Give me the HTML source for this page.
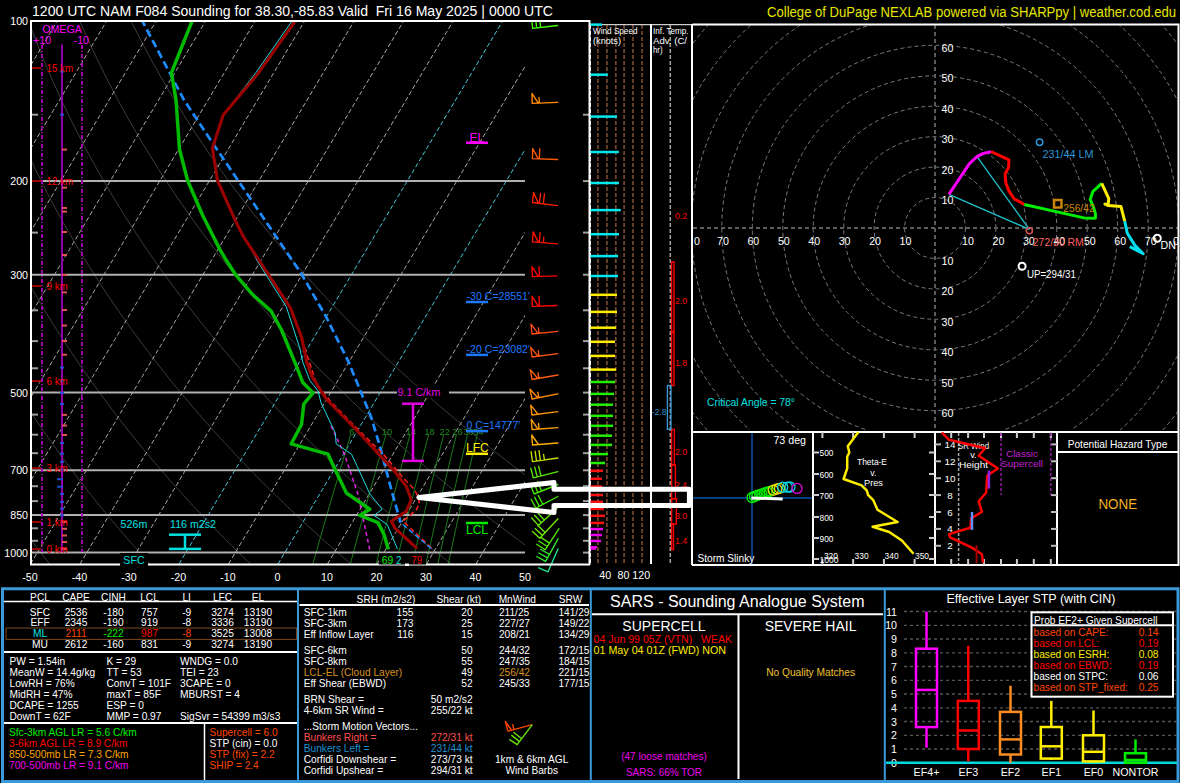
<!DOCTYPE html><html><head><meta charset="utf-8"><style>html,body{margin:0;padding:0;background:#000;width:1180px;height:783px;overflow:hidden}</style></head><body><svg width="1180" height="783" viewBox="0 0 1180 783" style="position:absolute;left:0;top:0" font-family="Liberation Sans, sans-serif">
<rect width="1180" height="783" fill="#000"/>
<defs><clipPath id="skc"><rect x="32" y="22" width="493" height="542"/></clipPath><clipPath id="hodc"><rect x="693" y="25" width="486" height="405"/></clipPath></defs>
<text x="32" y="16" fill="#fff" font-size="15" text-anchor="start" textLength="521" lengthAdjust="spacingAndGlyphs" xml:space="preserve">1200 UTC NAM F084 Sounding for 38.30,-85.83 Valid  Fri 16 May 2025 | 0000 UTC</text>
<text x="767" y="17" fill="#e6e600" font-size="14" text-anchor="start" textLength="409" lengthAdjust="spacingAndGlyphs" >College of DuPage NEXLAB powered via SHARPpy | weather.cod.edu</text>
<g clip-path="url(#skc)">
<polyline points="-552.6,566.1 -552.7,563.9 -552.8,561.7 -552.9,559.4 -553,557.2 -553.1,554.9 -553.2,552.6 -553.3,550.3 -553.4,547.9 -553.5,545.6 -553.6,543.2 -553.7,540.8 -553.7,538.3 -553.8,535.8 -553.9,533.4 -553.9,530.8 -554,528.3 -554,525.7 -554.1,523.1 -554.1,520.5 -554.2,517.8 -554.2,515.1 -554.2,512.4 -554.3,509.6 -554.3,506.8 -554.3,504 -554.3,501.1 -554.3,498.2 -554.3,495.2 -554.3,492.3 -554.3,489.3 -554.2,486.2 -554.2,483.1 -554.1,480 -554.1,476.8 -554,473.5 -554,470.3 -553.9,466.9 -553.8,463.6 -553.7,460.2 -553.6,456.7 -553.5,453.2 -553.4,449.6 -553.2,445.9 -553.1,442.3 -552.9,438.5 -552.8,434.7 -552.6,430.8 -552.4,426.9 -552.2,422.8 -551.9,418.8 -551.7,414.6 -551.4,410.4 -551.2,406.1 -550.9,401.7 -550.6,397.2 -550.2,392.6 -549.9,387.9 -549.5,383.2 -549.1,378.3 -548.7,373.4 -548.2,368.3 -547.8,363.1 -547.3,357.8 -546.7,352.4 -546.2,346.8 -545.6,341.1 -545,335.3 -544.3,329.3 -543.6,323.1 -542.8,316.8 -542,310.3 -541.2,303.6 -540.3,296.7 -539.3,289.6 -538.3,282.3 -537.2,274.7 -536.1,266.9 -534.8,258.8 -533.5,250.4 -532.1,241.7 -530.6,232.6 -529,223.2 -527.3,213.4 -525.5,203.1 -523.5,192.4 -521.3,181.1 -519,169.3 -516.4,156.8 -513.7,143.6 -510.7,129.6 -507.3,114.7 -503.7,98.8 -499.6,81.7 -495.1,63.2 -490,43.1 -484.3,21.1" fill="none" stroke="#3c3c3c" stroke-width="1" stroke-linejoin="round" />
<polyline points="-452,566.1 -452.3,563.9 -452.7,561.7 -453.1,559.4 -453.5,557.2 -453.9,554.9 -454.2,552.6 -454.6,550.3 -455,547.9 -455.4,545.6 -455.7,543.2 -456.1,540.8 -456.5,538.3 -456.8,535.8 -457.2,533.4 -457.6,530.8 -457.9,528.3 -458.3,525.7 -458.6,523.1 -459,520.5 -459.3,517.8 -459.7,515.1 -460,512.4 -460.4,509.6 -460.7,506.8 -461.1,504 -461.4,501.1 -461.7,498.2 -462.1,495.2 -462.4,492.3 -462.7,489.3 -463,486.2 -463.4,483.1 -463.7,480 -464,476.8 -464.3,473.5 -464.6,470.3 -464.9,466.9 -465.1,463.6 -465.4,460.2 -465.7,456.7 -466,453.2 -466.2,449.6 -466.5,445.9 -466.7,442.3 -467,438.5 -467.2,434.7 -467.4,430.8 -467.7,426.9 -467.9,422.8 -468.1,418.8 -468.3,414.6 -468.4,410.4 -468.6,406.1 -468.8,401.7 -468.9,397.2 -469,392.6 -469.1,387.9 -469.2,383.2 -469.3,378.3 -469.4,373.4 -469.4,368.3 -469.5,363.1 -469.5,357.8 -469.5,352.4 -469.4,346.8 -469.4,341.1 -469.3,335.3 -469.2,329.3 -469.1,323.1 -468.9,316.8 -468.7,310.3 -468.4,303.6 -468.2,296.7 -467.8,289.6 -467.5,282.3 -467,274.7 -466.6,266.9 -466,258.8 -465.4,250.4 -464.8,241.7 -464,232.6 -463.2,223.2 -462.3,213.4 -461.2,203.1 -460.1,192.4 -458.8,181.1 -457.4,169.3 -455.8,156.8 -454,143.6 -452,129.6 -449.8,114.7 -447.2,98.8 -444.4,81.7 -441.1,63.2 -437.3,43.1 -433,21.1" fill="none" stroke="#3c3c3c" stroke-width="1" stroke-linejoin="round" />
<polyline points="-351.3,566.1 -352,563.9 -352.6,561.7 -353.3,559.4 -353.9,557.2 -354.6,554.9 -355.2,552.6 -355.9,550.3 -356.6,547.9 -357.2,545.6 -357.9,543.2 -358.5,540.8 -359.2,538.3 -359.9,535.8 -360.5,533.4 -361.2,530.8 -361.9,528.3 -362.5,525.7 -363.2,523.1 -363.9,520.5 -364.5,517.8 -365.2,515.1 -365.9,512.4 -366.5,509.6 -367.2,506.8 -367.9,504 -368.5,501.1 -369.2,498.2 -369.9,495.2 -370.5,492.3 -371.2,489.3 -371.8,486.2 -372.5,483.1 -373.2,480 -373.8,476.8 -374.5,473.5 -375.2,470.3 -375.8,466.9 -376.5,463.6 -377.1,460.2 -377.8,456.7 -378.4,453.2 -379.1,449.6 -379.7,445.9 -380.4,442.3 -381,438.5 -381.7,434.7 -382.3,430.8 -382.9,426.9 -383.6,422.8 -384.2,418.8 -384.8,414.6 -385.4,410.4 -386,406.1 -386.6,401.7 -387.2,397.2 -387.8,392.6 -388.4,387.9 -389,383.2 -389.5,378.3 -390.1,373.4 -390.6,368.3 -391.2,363.1 -391.7,357.8 -392.2,352.4 -392.7,346.8 -393.2,341.1 -393.7,335.3 -394.1,329.3 -394.5,323.1 -394.9,316.8 -395.3,310.3 -395.7,303.6 -396,296.7 -396.3,289.6 -396.6,282.3 -396.9,274.7 -397.1,266.9 -397.2,258.8 -397.3,250.4 -397.4,241.7 -397.4,232.6 -397.3,223.2 -397.2,213.4 -397,203.1 -396.7,192.4 -396.3,181.1 -395.8,169.3 -395.1,156.8 -394.3,143.6 -393.4,129.6 -392.2,114.7 -390.8,98.8 -389.1,81.7 -387.1,63.2 -384.6,43.1 -381.7,21.1" fill="none" stroke="#3c3c3c" stroke-width="1" stroke-linejoin="round" />
<polyline points="-250.6,566.1 -251.6,563.9 -252.5,561.7 -253.4,559.4 -254.4,557.2 -255.3,554.9 -256.2,552.6 -257.2,550.3 -258.1,547.9 -259.1,545.6 -260,543.2 -261,540.8 -261.9,538.3 -262.9,535.8 -263.9,533.4 -264.8,530.8 -265.8,528.3 -266.8,525.7 -267.7,523.1 -268.7,520.5 -269.7,517.8 -270.7,515.1 -271.7,512.4 -272.7,509.6 -273.6,506.8 -274.6,504 -275.6,501.1 -276.6,498.2 -277.6,495.2 -278.6,492.3 -279.6,489.3 -280.7,486.2 -281.7,483.1 -282.7,480 -283.7,476.8 -284.7,473.5 -285.7,470.3 -286.8,466.9 -287.8,463.6 -288.8,460.2 -289.9,456.7 -290.9,453.2 -291.9,449.6 -293,445.9 -294,442.3 -295.1,438.5 -296.1,434.7 -297.1,430.8 -298.2,426.9 -299.2,422.8 -300.3,418.8 -301.3,414.6 -302.4,410.4 -303.4,406.1 -304.5,401.7 -305.5,397.2 -306.6,392.6 -307.6,387.9 -308.7,383.2 -309.7,378.3 -310.8,373.4 -311.8,368.3 -312.9,363.1 -313.9,357.8 -314.9,352.4 -316,346.8 -317,341.1 -318,335.3 -319,329.3 -320,323.1 -321,316.8 -322,310.3 -323,303.6 -323.9,296.7 -324.8,289.6 -325.8,282.3 -326.7,274.7 -327.5,266.9 -328.4,258.8 -329.2,250.4 -330,241.7 -330.8,232.6 -331.5,223.2 -332.1,213.4 -332.8,203.1 -333.3,192.4 -333.8,181.1 -334.2,169.3 -334.5,156.8 -334.7,143.6 -334.7,129.6 -334.6,114.7 -334.3,98.8 -333.8,81.7 -333,63.2 -331.9,43.1 -330.4,21.1" fill="none" stroke="#3c3c3c" stroke-width="1" stroke-linejoin="round" />
<polyline points="-150,566.1 -151.2,563.9 -152.4,561.7 -153.6,559.4 -154.8,557.2 -156,554.9 -157.2,552.6 -158.5,550.3 -159.7,547.9 -160.9,545.6 -162.2,543.2 -163.4,540.8 -164.7,538.3 -165.9,535.8 -167.2,533.4 -168.5,530.8 -169.7,528.3 -171,525.7 -172.3,523.1 -173.6,520.5 -174.9,517.8 -176.2,515.1 -177.5,512.4 -178.8,509.6 -180.1,506.8 -181.4,504 -182.7,501.1 -184.1,498.2 -185.4,495.2 -186.8,492.3 -188.1,489.3 -189.5,486.2 -190.8,483.1 -192.2,480 -193.6,476.8 -195,473.5 -196.3,470.3 -197.7,466.9 -199.1,463.6 -200.5,460.2 -201.9,456.7 -203.4,453.2 -204.8,449.6 -206.2,445.9 -207.7,442.3 -209.1,438.5 -210.5,434.7 -212,430.8 -213.5,426.9 -214.9,422.8 -216.4,418.8 -217.9,414.6 -219.4,410.4 -220.9,406.1 -222.4,401.7 -223.9,397.2 -225.4,392.6 -226.9,387.9 -228.4,383.2 -229.9,378.3 -231.5,373.4 -233,368.3 -234.6,363.1 -236.1,357.8 -237.7,352.4 -239.2,346.8 -240.8,341.1 -242.4,335.3 -243.9,329.3 -245.5,323.1 -247.1,316.8 -248.6,310.3 -250.2,303.6 -251.8,296.7 -253.4,289.6 -254.9,282.3 -256.5,274.7 -258,266.9 -259.6,258.8 -261.1,250.4 -262.6,241.7 -264.1,232.6 -265.6,223.2 -267.1,213.4 -268.5,203.1 -269.9,192.4 -271.3,181.1 -272.6,169.3 -273.8,156.8 -275,143.6 -276.1,129.6 -277,114.7 -277.9,98.8 -278.5,81.7 -279,63.2 -279.2,43.1 -279.1,21.1" fill="none" stroke="#3c3c3c" stroke-width="1" stroke-linejoin="round" />
<polyline points="-49.3,566.1 -50.8,563.9 -52.3,561.7 -53.7,559.4 -55.2,557.2 -56.7,554.9 -58.2,552.6 -59.8,550.3 -61.3,547.9 -62.8,545.6 -64.3,543.2 -65.9,540.8 -67.4,538.3 -69,535.8 -70.5,533.4 -72.1,530.8 -73.7,528.3 -75.3,525.7 -76.8,523.1 -78.4,520.5 -80,517.8 -81.7,515.1 -83.3,512.4 -84.9,509.6 -86.6,506.8 -88.2,504 -89.9,501.1 -91.5,498.2 -93.2,495.2 -94.9,492.3 -96.6,489.3 -98.3,486.2 -100,483.1 -101.7,480 -103.4,476.8 -105.2,473.5 -106.9,470.3 -108.7,466.9 -110.5,463.6 -112.2,460.2 -114,456.7 -115.8,453.2 -117.6,449.6 -119.5,445.9 -121.3,442.3 -123.1,438.5 -125,434.7 -126.9,430.8 -128.7,426.9 -130.6,422.8 -132.5,418.8 -134.4,414.6 -136.4,410.4 -138.3,406.1 -140.2,401.7 -142.2,397.2 -144.2,392.6 -146.2,387.9 -148.1,383.2 -150.2,378.3 -152.2,373.4 -154.2,368.3 -156.3,363.1 -158.3,357.8 -160.4,352.4 -162.5,346.8 -164.6,341.1 -166.7,335.3 -168.8,329.3 -171,323.1 -173.1,316.8 -175.3,310.3 -177.5,303.6 -179.7,296.7 -181.9,289.6 -184.1,282.3 -186.3,274.7 -188.5,266.9 -190.8,258.8 -193,250.4 -195.3,241.7 -197.5,232.6 -199.8,223.2 -202,213.4 -204.3,203.1 -206.5,192.4 -208.8,181.1 -211,169.3 -213.2,156.8 -215.3,143.6 -217.4,129.6 -219.5,114.7 -221.4,98.8 -223.3,81.7 -225,63.2 -226.6,43.1 -227.9,21.1" fill="none" stroke="#3c3c3c" stroke-width="1" stroke-linejoin="round" />
<polyline points="51.3,566.1 49.6,563.9 47.8,561.7 46.1,559.4 44.3,557.2 42.5,554.9 40.8,552.6 39,550.3 37.2,547.9 35.3,545.6 33.5,543.2 31.7,540.8 29.9,538.3 28,535.8 26.1,533.4 24.3,530.8 22.4,528.3 20.5,525.7 18.6,523.1 16.7,520.5 14.8,517.8 12.8,515.1 10.9,512.4 8.9,509.6 7,506.8 5,504 3,501.1 1,498.2 -1,495.2 -3,492.3 -5,489.3 -7.1,486.2 -9.2,483.1 -11.2,480 -13.3,476.8 -15.4,473.5 -17.5,470.3 -19.6,466.9 -21.8,463.6 -23.9,460.2 -26.1,456.7 -28.3,453.2 -30.5,449.6 -32.7,445.9 -34.9,442.3 -37.2,438.5 -39.4,434.7 -41.7,430.8 -44,426.9 -46.3,422.8 -48.6,418.8 -51,414.6 -53.3,410.4 -55.7,406.1 -58.1,401.7 -60.5,397.2 -63,392.6 -65.4,387.9 -67.9,383.2 -70.4,378.3 -72.9,373.4 -75.4,368.3 -78,363.1 -80.5,357.8 -83.1,352.4 -85.8,346.8 -88.4,341.1 -91.1,335.3 -93.7,329.3 -96.5,323.1 -99.2,316.8 -101.9,310.3 -104.7,303.6 -107.5,296.7 -110.4,289.6 -113.2,282.3 -116.1,274.7 -119,266.9 -122,258.8 -124.9,250.4 -127.9,241.7 -130.9,232.6 -133.9,223.2 -137,213.4 -140.1,203.1 -143.1,192.4 -146.3,181.1 -149.4,169.3 -152.5,156.8 -155.6,143.6 -158.8,129.6 -161.9,114.7 -165,98.8 -168,81.7 -171,63.2 -173.9,43.1 -176.6,21.1" fill="none" stroke="#3c3c3c" stroke-width="1" stroke-linejoin="round" />
<polyline points="152,566.1 150,563.9 148,561.7 145.9,559.4 143.9,557.2 141.8,554.9 139.8,552.6 137.7,550.3 135.6,547.9 133.5,545.6 131.4,543.2 129.3,540.8 127.1,538.3 125,535.8 122.8,533.4 120.6,530.8 118.5,528.3 116.3,525.7 114.1,523.1 111.8,520.5 109.6,517.8 107.4,515.1 105.1,512.4 102.8,509.6 100.5,506.8 98.2,504 95.9,501.1 93.6,498.2 91.2,495.2 88.9,492.3 86.5,489.3 84.1,486.2 81.7,483.1 79.3,480 76.8,476.8 74.4,473.5 71.9,470.3 69.4,466.9 66.9,463.6 64.4,460.2 61.8,456.7 59.2,453.2 56.7,449.6 54.1,445.9 51.4,442.3 48.8,438.5 46.1,434.7 43.4,430.8 40.7,426.9 38,422.8 35.3,418.8 32.5,414.6 29.7,410.4 26.9,406.1 24,401.7 21.2,397.2 18.3,392.6 15.3,387.9 12.4,383.2 9.4,378.3 6.4,373.4 3.4,368.3 0.3,363.1 -2.8,357.8 -5.9,352.4 -9,346.8 -12.2,341.1 -15.4,335.3 -18.7,329.3 -21.9,323.1 -25.3,316.8 -28.6,310.3 -32,303.6 -35.4,296.7 -38.9,289.6 -42.4,282.3 -45.9,274.7 -49.5,266.9 -53.1,258.8 -56.8,250.4 -60.5,241.7 -64.3,232.6 -68.1,223.2 -71.9,213.4 -75.8,203.1 -79.8,192.4 -83.7,181.1 -87.8,169.3 -91.9,156.8 -96,143.6 -100.1,129.6 -104.3,114.7 -108.5,98.8 -112.7,81.7 -117,63.2 -121.2,43.1 -125.3,21.1" fill="none" stroke="#3c3c3c" stroke-width="1" stroke-linejoin="round" />
<polyline points="252.7,566.1 250.4,563.9 248.1,561.7 245.8,559.4 243.4,557.2 241.1,554.9 238.8,552.6 236.4,550.3 234,547.9 231.6,545.6 229.2,543.2 226.8,540.8 224.4,538.3 221.9,535.8 219.5,533.4 217,530.8 214.5,528.3 212,525.7 209.5,523.1 207,520.5 204.4,517.8 201.9,515.1 199.3,512.4 196.7,509.6 194.1,506.8 191.4,504 188.8,501.1 186.1,498.2 183.4,495.2 180.7,492.3 178,489.3 175.3,486.2 172.5,483.1 169.7,480 167,476.8 164.1,473.5 161.3,470.3 158.4,466.9 155.6,463.6 152.7,460.2 149.7,456.7 146.8,453.2 143.8,449.6 140.8,445.9 137.8,442.3 134.8,438.5 131.7,434.7 128.6,430.8 125.5,426.9 122.3,422.8 119.1,418.8 115.9,414.6 112.7,410.4 109.4,406.1 106.2,401.7 102.8,397.2 99.5,392.6 96.1,387.9 92.7,383.2 89.2,378.3 85.7,373.4 82.2,368.3 78.6,363.1 75,357.8 71.4,352.4 67.7,346.8 64,341.1 60.2,335.3 56.4,329.3 52.6,323.1 48.7,316.8 44.7,310.3 40.8,303.6 36.7,296.7 32.6,289.6 28.5,282.3 24.3,274.7 20,266.9 15.7,258.8 11.3,250.4 6.9,241.7 2.3,232.6 -2.2,223.2 -6.9,213.4 -11.6,203.1 -16.4,192.4 -21.2,181.1 -26.2,169.3 -31.2,156.8 -36.3,143.6 -41.5,129.6 -46.7,114.7 -52.1,98.8 -57.5,81.7 -62.9,63.2 -68.5,43.1 -74,21.1" fill="none" stroke="#3c3c3c" stroke-width="1" stroke-linejoin="round" />
<polyline points="353.3,566.1 350.8,563.9 348.2,561.7 345.6,559.4 343,557.2 340.4,554.9 337.8,552.6 335.1,550.3 332.5,547.9 329.8,545.6 327.1,543.2 324.4,540.8 321.7,538.3 318.9,535.8 316.2,533.4 313.4,530.8 310.6,528.3 307.8,525.7 305,523.1 302.1,520.5 299.3,517.8 296.4,515.1 293.5,512.4 290.6,509.6 287.6,506.8 284.7,504 281.7,501.1 278.7,498.2 275.7,495.2 272.6,492.3 269.6,489.3 266.5,486.2 263.4,483.1 260.2,480 257.1,476.8 253.9,473.5 250.7,470.3 247.5,466.9 244.2,463.6 240.9,460.2 237.6,456.7 234.3,453.2 231,449.6 227.6,445.9 224.2,442.3 220.7,438.5 217.2,434.7 213.7,430.8 210.2,426.9 206.6,422.8 203,418.8 199.4,414.6 195.7,410.4 192,406.1 188.3,401.7 184.5,397.2 180.7,392.6 176.8,387.9 172.9,383.2 169,378.3 165,373.4 161,368.3 156.9,363.1 152.8,357.8 148.7,352.4 144.5,346.8 140.2,341.1 135.9,335.3 131.5,329.3 127.1,323.1 122.6,316.8 118.1,310.3 113.5,303.6 108.8,296.7 104.1,289.6 99.3,282.3 94.4,274.7 89.5,266.9 84.5,258.8 79.4,250.4 74.2,241.7 69,232.6 63.6,223.2 58.2,213.4 52.6,203.1 47,192.4 41.3,181.1 35.4,169.3 29.5,156.8 23.4,143.6 17.2,129.6 10.8,114.7 4.4,98.8 -2.2,81.7 -8.9,63.2 -15.8,43.1 -22.8,21.1" fill="none" stroke="#3c3c3c" stroke-width="1" stroke-linejoin="round" />
<polyline points="454,566.1 451.2,563.9 448.3,561.7 445.4,559.4 442.6,557.2 439.7,554.9 436.8,552.6 433.8,550.3 430.9,547.9 427.9,545.6 424.9,543.2 421.9,540.8 418.9,538.3 415.9,535.8 412.8,533.4 409.7,530.8 406.7,528.3 403.5,525.7 400.4,523.1 397.3,520.5 394.1,517.8 390.9,515.1 387.7,512.4 384.4,509.6 381.2,506.8 377.9,504 374.6,501.1 371.2,498.2 367.9,495.2 364.5,492.3 361.1,489.3 357.7,486.2 354.2,483.1 350.7,480 347.2,476.8 343.7,473.5 340.1,470.3 336.5,466.9 332.9,463.6 329.2,460.2 325.6,456.7 321.9,453.2 318.1,449.6 314.3,445.9 310.5,442.3 306.7,438.5 302.8,434.7 298.9,430.8 294.9,426.9 290.9,422.8 286.9,418.8 282.9,414.6 278.7,410.4 274.6,406.1 270.4,401.7 266.2,397.2 261.9,392.6 257.6,387.9 253.2,383.2 248.8,378.3 244.3,373.4 239.8,368.3 235.2,363.1 230.6,357.8 225.9,352.4 221.2,346.8 216.4,341.1 211.5,335.3 206.6,329.3 201.6,323.1 196.6,316.8 191.4,310.3 186.2,303.6 181,296.7 175.6,289.6 170.2,282.3 164.6,274.7 159,266.9 153.3,258.8 147.5,250.4 141.6,241.7 135.6,232.6 129.5,223.2 123.2,213.4 116.9,203.1 110.4,192.4 103.8,181.1 97,169.3 90.1,156.8 83.1,143.6 75.8,129.6 68.4,114.7 60.8,98.8 53.1,81.7 45.1,63.2 36.9,43.1 28.5,21.1" fill="none" stroke="#3c3c3c" stroke-width="1" stroke-linejoin="round" />
<polyline points="554.7,566.1 551.5,563.9 548.4,561.7 545.3,559.4 542.1,557.2 539,554.9 535.8,552.6 532.5,550.3 529.3,547.9 526.1,545.6 522.8,543.2 519.5,540.8 516.2,538.3 512.8,535.8 509.5,533.4 506.1,530.8 502.7,528.3 499.3,525.7 495.9,523.1 492.4,520.5 488.9,517.8 485.4,515.1 481.8,512.4 478.3,509.6 474.7,506.8 471.1,504 467.4,501.1 463.8,498.2 460.1,495.2 456.4,492.3 452.6,489.3 448.8,486.2 445,483.1 441.2,480 437.3,476.8 433.4,473.5 429.5,470.3 425.6,466.9 421.6,463.6 417.5,460.2 413.5,456.7 409.4,453.2 405.3,449.6 401.1,445.9 396.9,442.3 392.6,438.5 388.4,434.7 384,430.8 379.7,426.9 375.3,422.8 370.8,418.8 366.3,414.6 361.8,410.4 357.2,406.1 352.5,401.7 347.9,397.2 343.1,392.6 338.3,387.9 333.5,383.2 328.6,378.3 323.6,373.4 318.6,368.3 313.5,363.1 308.4,357.8 303.2,352.4 297.9,346.8 292.6,341.1 287.2,335.3 281.7,329.3 276.1,323.1 270.5,316.8 264.8,310.3 259,303.6 253.1,296.7 247.1,289.6 241,282.3 234.8,274.7 228.5,266.9 222.1,258.8 215.6,250.4 209,241.7 202.2,232.6 195.3,223.2 188.3,213.4 181.1,203.1 173.8,192.4 166.3,181.1 158.6,169.3 150.8,156.8 142.7,143.6 134.5,129.6 126,114.7 117.3,98.8 108.3,81.7 99.1,63.2 89.6,43.1 79.8,21.1" fill="none" stroke="#3c3c3c" stroke-width="1" stroke-linejoin="round" />
<polyline points="655.3,566.1 651.9,563.9 648.5,561.7 645.1,559.4 641.7,557.2 638.2,554.9 634.8,552.6 631.3,550.3 627.7,547.9 624.2,545.6 620.6,543.2 617.1,540.8 613.4,538.3 609.8,535.8 606.2,533.4 602.5,530.8 598.8,528.3 595.1,525.7 591.3,523.1 587.5,520.5 583.7,517.8 579.9,515.1 576,512.4 572.2,509.6 568.2,506.8 564.3,504 560.3,501.1 556.3,498.2 552.3,495.2 548.2,492.3 544.2,489.3 540,486.2 535.9,483.1 531.7,480 527.5,476.8 523.2,473.5 518.9,470.3 514.6,466.9 510.2,463.6 505.8,460.2 501.4,456.7 496.9,453.2 492.4,449.6 487.8,445.9 483.2,442.3 478.6,438.5 473.9,434.7 469.2,430.8 464.4,426.9 459.6,422.8 454.7,418.8 449.8,414.6 444.8,410.4 439.8,406.1 434.7,401.7 429.5,397.2 424.3,392.6 419.1,387.9 413.8,383.2 408.4,378.3 402.9,373.4 397.4,368.3 391.8,363.1 386.2,357.8 380.5,352.4 374.7,346.8 368.8,341.1 362.8,335.3 356.8,329.3 350.7,323.1 344.4,316.8 338.1,310.3 331.7,303.6 325.2,296.7 318.6,289.6 311.9,282.3 305,274.7 298,266.9 290.9,258.8 283.7,250.4 276.4,241.7 268.8,232.6 261.2,223.2 253.3,213.4 245.3,203.1 237.2,192.4 228.8,181.1 220.2,169.3 211.4,156.8 202.4,143.6 193.1,129.6 183.6,114.7 173.7,98.8 163.6,81.7 153.1,63.2 142.3,43.1 131.1,21.1" fill="none" stroke="#3c3c3c" stroke-width="1" stroke-linejoin="round" />
<line x1="-464.5" y1="564" x2="-140.9" y2="21.1" stroke="#a8a8a8" stroke-width="1" stroke-dasharray="4.5 2.5"/>
<line x1="-415" y1="564" x2="-91.4" y2="21.1" stroke="#a8a8a8" stroke-width="1" stroke-dasharray="4.5 2.5"/>
<line x1="-365.5" y1="564" x2="-41.9" y2="21.1" stroke="#a8a8a8" stroke-width="1" stroke-dasharray="4.5 2.5"/>
<line x1="-316" y1="564" x2="7.6" y2="21.1" stroke="#a8a8a8" stroke-width="1" stroke-dasharray="4.5 2.5"/>
<line x1="-266.5" y1="564" x2="57.1" y2="21.1" stroke="#a8a8a8" stroke-width="1" stroke-dasharray="4.5 2.5"/>
<line x1="-217" y1="564" x2="106.6" y2="21.1" stroke="#a8a8a8" stroke-width="1" stroke-dasharray="4.5 2.5"/>
<line x1="-167.5" y1="564" x2="156.1" y2="21.1" stroke="#a8a8a8" stroke-width="1" stroke-dasharray="4.5 2.5"/>
<line x1="-118" y1="564" x2="205.6" y2="21.1" stroke="#a8a8a8" stroke-width="1" stroke-dasharray="4.5 2.5"/>
<line x1="-68.5" y1="564" x2="255.1" y2="21.1" stroke="#a8a8a8" stroke-width="1" stroke-dasharray="4.5 2.5"/>
<line x1="-19" y1="564" x2="304.6" y2="21.1" stroke="#a8a8a8" stroke-width="1" stroke-dasharray="4.5 2.5"/>
<line x1="30.5" y1="564" x2="354.1" y2="21.1" stroke="#a8a8a8" stroke-width="1" stroke-dasharray="4.5 2.5"/>
<line x1="80" y1="564" x2="403.6" y2="21.1" stroke="#a8a8a8" stroke-width="1" stroke-dasharray="4.5 2.5"/>
<line x1="129.5" y1="564" x2="453.1" y2="21.1" stroke="#a8a8a8" stroke-width="1" stroke-dasharray="4.5 2.5"/>
<line x1="179" y1="564" x2="502.6" y2="21.1" stroke="#45c8d8" stroke-width="1" stroke-dasharray="4.5 2.5"/>
<line x1="228.5" y1="564" x2="552.1" y2="21.1" stroke="#a8a8a8" stroke-width="1" stroke-dasharray="4.5 2.5"/>
<line x1="278" y1="564" x2="601.6" y2="21.1" stroke="#45c8d8" stroke-width="1" stroke-dasharray="4.5 2.5"/>
<line x1="327.5" y1="564" x2="651.1" y2="21.1" stroke="#a8a8a8" stroke-width="1" stroke-dasharray="4.5 2.5"/>
<line x1="377" y1="564" x2="700.6" y2="21.1" stroke="#a8a8a8" stroke-width="1" stroke-dasharray="4.5 2.5"/>
<line x1="426.5" y1="564" x2="750.1" y2="21.1" stroke="#a8a8a8" stroke-width="1" stroke-dasharray="4.5 2.5"/>
<line x1="476" y1="564" x2="799.6" y2="21.1" stroke="#a8a8a8" stroke-width="1" stroke-dasharray="4.5 2.5"/>
<line x1="525.5" y1="564" x2="849.1" y2="21.1" stroke="#a8a8a8" stroke-width="1" stroke-dasharray="4.5 2.5"/>
<polyline points="312.2,566.1 316.1,552.6 323,528.3 330.9,501.1 340,470.3 350.7,434.7" fill="none" stroke="#1a7a1a" stroke-width="1" stroke-linejoin="round" />
<polyline points="349.8,566.1 353.4,552.6 359.9,528.3 367.3,501.1 375.8,470.3 385.9,434.7" fill="none" stroke="#1a7a1a" stroke-width="1" stroke-linejoin="round" />
<polyline points="375.7,566.1 379,552.6 385.2,528.3 392.3,501.1 400.4,470.3 410,434.7" fill="none" stroke="#1a7a1a" stroke-width="1" stroke-linejoin="round" />
<polyline points="395.5,566.1 398.8,552.6 404.7,528.3 411.5,501.1 419.3,470.3 428.6,434.7" fill="none" stroke="#1a7a1a" stroke-width="1" stroke-linejoin="round" />
<polyline points="411.7,566.1 414.8,552.6 420.6,528.3 427.1,501.1 434.7,470.3 443.7,434.7" fill="none" stroke="#1a7a1a" stroke-width="1" stroke-linejoin="round" />
<polyline points="425.4,566.1 428.4,552.6 434,528.3 440.3,501.1 447.7,470.3 456.4,434.7" fill="none" stroke="#1a7a1a" stroke-width="1" stroke-linejoin="round" />
<polyline points="437.3,566.1 440.3,552.6 445.6,528.3 451.8,501.1 459,470.3 467.5,434.7" fill="none" stroke="#1a7a1a" stroke-width="1" stroke-linejoin="round" />
<polyline points="447.8,566.1 450.7,552.6 455.9,528.3 462,501.1 469,470.3 477.3,434.7" fill="none" stroke="#1a7a1a" stroke-width="1" stroke-linejoin="round" />
</g>
<text transform="translate(351.7,435) scale(0.97,1)" fill="#1f8a1f" font-size="9.5" text-anchor="middle" >6</text>
<text transform="translate(386.9,435) scale(0.97,1)" fill="#1f8a1f" font-size="9.5" text-anchor="middle" >10</text>
<text transform="translate(411,435) scale(0.97,1)" fill="#1f8a1f" font-size="9.5" text-anchor="middle" >14</text>
<text transform="translate(429.6,435) scale(0.97,1)" fill="#1f8a1f" font-size="9.5" text-anchor="middle" >18</text>
<text transform="translate(444.7,435) scale(0.97,1)" fill="#1f8a1f" font-size="9.5" text-anchor="middle" >22</text>
<text transform="translate(457.4,435) scale(0.97,1)" fill="#1f8a1f" font-size="9.5" text-anchor="middle" >26</text>
<text transform="translate(468.5,435) scale(0.97,1)" fill="#1f8a1f" font-size="9.5" text-anchor="middle" >30</text>
<text transform="translate(478.3,435) scale(0.97,1)" fill="#1f8a1f" font-size="9.5" text-anchor="middle" >34</text>
<line x1="32" y1="181.1" x2="525" y2="181.1" stroke="#b0b0b0" stroke-width="2" />
<line x1="32" y1="274.7" x2="525" y2="274.7" stroke="#b0b0b0" stroke-width="2" />
<line x1="32" y1="392.6" x2="525" y2="392.6" stroke="#b0b0b0" stroke-width="2" />
<line x1="32" y1="470.3" x2="525" y2="470.3" stroke="#b0b0b0" stroke-width="2" />
<line x1="32" y1="515.1" x2="525" y2="515.1" stroke="#b0b0b0" stroke-width="2" />
<line x1="32" y1="552.6" x2="525" y2="552.6" stroke="#b0b0b0" stroke-width="2" />
<line x1="32" y1="114.7" x2="38" y2="114.7" stroke="#a0a0a0" stroke-width="2" />
<line x1="32" y1="232.6" x2="38" y2="232.6" stroke="#a0a0a0" stroke-width="2" />
<line x1="32" y1="310.3" x2="38" y2="310.3" stroke="#a0a0a0" stroke-width="2" />
<line x1="32" y1="341.1" x2="38" y2="341.1" stroke="#a0a0a0" stroke-width="2" />
<line x1="32" y1="368.3" x2="38" y2="368.3" stroke="#a0a0a0" stroke-width="2" />
<line x1="32" y1="414.6" x2="38" y2="414.6" stroke="#a0a0a0" stroke-width="2" />
<line x1="32" y1="434.7" x2="38" y2="434.7" stroke="#a0a0a0" stroke-width="2" />
<line x1="32" y1="453.2" x2="38" y2="453.2" stroke="#a0a0a0" stroke-width="2" />
<line x1="32" y1="486.2" x2="38" y2="486.2" stroke="#a0a0a0" stroke-width="2" />
<line x1="32" y1="501.1" x2="38" y2="501.1" stroke="#a0a0a0" stroke-width="2" />
<line x1="32" y1="528.3" x2="38" y2="528.3" stroke="#a0a0a0" stroke-width="2" />
<line x1="32" y1="540.8" x2="38" y2="540.8" stroke="#a0a0a0" stroke-width="2" />
<line x1="583" y1="114.7" x2="589" y2="114.7" stroke="#a0a0a0" stroke-width="2" />
<line x1="583" y1="181.1" x2="589" y2="181.1" stroke="#a0a0a0" stroke-width="2" />
<line x1="583" y1="232.6" x2="589" y2="232.6" stroke="#a0a0a0" stroke-width="2" />
<line x1="583" y1="274.7" x2="589" y2="274.7" stroke="#a0a0a0" stroke-width="2" />
<line x1="583" y1="310.3" x2="589" y2="310.3" stroke="#a0a0a0" stroke-width="2" />
<line x1="583" y1="341.1" x2="589" y2="341.1" stroke="#a0a0a0" stroke-width="2" />
<line x1="583" y1="368.3" x2="589" y2="368.3" stroke="#a0a0a0" stroke-width="2" />
<line x1="583" y1="392.6" x2="589" y2="392.6" stroke="#a0a0a0" stroke-width="2" />
<line x1="583" y1="414.6" x2="589" y2="414.6" stroke="#a0a0a0" stroke-width="2" />
<line x1="583" y1="434.7" x2="589" y2="434.7" stroke="#a0a0a0" stroke-width="2" />
<line x1="583" y1="453.2" x2="589" y2="453.2" stroke="#a0a0a0" stroke-width="2" />
<line x1="583" y1="470.3" x2="589" y2="470.3" stroke="#a0a0a0" stroke-width="2" />
<line x1="583" y1="486.2" x2="589" y2="486.2" stroke="#a0a0a0" stroke-width="2" />
<line x1="583" y1="501.1" x2="589" y2="501.1" stroke="#a0a0a0" stroke-width="2" />
<line x1="583" y1="515.1" x2="589" y2="515.1" stroke="#a0a0a0" stroke-width="2" />
<line x1="583" y1="528.3" x2="589" y2="528.3" stroke="#a0a0a0" stroke-width="2" />
<line x1="583" y1="540.8" x2="589" y2="540.8" stroke="#a0a0a0" stroke-width="2" />
<line x1="583" y1="552.6" x2="589" y2="552.6" stroke="#a0a0a0" stroke-width="2" />
<text transform="translate(28,25.1) scale(0.97,1)" fill="#fff" font-size="11" text-anchor="end" >100</text>
<text transform="translate(28,185.1) scale(0.97,1)" fill="#fff" font-size="11" text-anchor="end" >200</text>
<text transform="translate(28,278.7) scale(0.97,1)" fill="#fff" font-size="11" text-anchor="end" >300</text>
<text transform="translate(28,396.6) scale(0.97,1)" fill="#fff" font-size="11" text-anchor="end" >500</text>
<text transform="translate(28,474.3) scale(0.97,1)" fill="#fff" font-size="11" text-anchor="end" >700</text>
<text transform="translate(28,519.1) scale(0.97,1)" fill="#fff" font-size="11" text-anchor="end" >850</text>
<text transform="translate(28,556.6) scale(0.97,1)" fill="#fff" font-size="11" text-anchor="end" >1000</text>
<text transform="translate(30,581) scale(0.97,1)" fill="#fff" font-size="11" text-anchor="middle" >-50</text>
<text transform="translate(79.5,581) scale(0.97,1)" fill="#fff" font-size="11" text-anchor="middle" >-40</text>
<text transform="translate(129,581) scale(0.97,1)" fill="#fff" font-size="11" text-anchor="middle" >-30</text>
<text transform="translate(178.5,581) scale(0.97,1)" fill="#fff" font-size="11" text-anchor="middle" >-20</text>
<text transform="translate(228,581) scale(0.97,1)" fill="#fff" font-size="11" text-anchor="middle" >-10</text>
<text transform="translate(277.5,581) scale(0.97,1)" fill="#fff" font-size="11" text-anchor="middle" >0</text>
<text transform="translate(327,581) scale(0.97,1)" fill="#fff" font-size="11" text-anchor="middle" >10</text>
<text transform="translate(376.5,581) scale(0.97,1)" fill="#fff" font-size="11" text-anchor="middle" >20</text>
<text transform="translate(426,581) scale(0.97,1)" fill="#fff" font-size="11" text-anchor="middle" >30</text>
<text transform="translate(475.5,581) scale(0.97,1)" fill="#fff" font-size="11" text-anchor="middle" >40</text>
<text transform="translate(525,581) scale(0.97,1)" fill="#fff" font-size="11" text-anchor="middle" >50</text>
<line x1="42" y1="45" x2="42" y2="552" stroke="#a000b0" stroke-width="2" stroke-dasharray="4 2 1 2"/>
<line x1="82" y1="45" x2="82" y2="552" stroke="#a000b0" stroke-width="2" stroke-dasharray="4 2 1 2"/>
<line x1="62" y1="44.5" x2="62" y2="552" stroke="#9000a8" stroke-width="2" />
<text transform="translate(62,33) scale(0.97,1)" fill="#ff00ff" font-size="11" text-anchor="middle" >OMEGA</text>
<text transform="translate(33,43.5) scale(0.97,1)" fill="#ff00ff" font-size="11" text-anchor="start" >+10</text>
<text transform="translate(89,43.5) scale(0.97,1)" fill="#ff00ff" font-size="11" text-anchor="end" >-10</text>
<line x1="62" y1="208" x2="67" y2="208" stroke="#e05050" stroke-width="2" />
<line x1="62" y1="232" x2="67" y2="232" stroke="#e05050" stroke-width="2" />
<line x1="62" y1="255" x2="67" y2="255" stroke="#e05050" stroke-width="2" />
<line x1="62" y1="275" x2="67" y2="275" stroke="#e05050" stroke-width="2" />
<line x1="62" y1="292.4" x2="67" y2="292.4" stroke="#e05050" stroke-width="2" />
<line x1="62" y1="310" x2="67" y2="310" stroke="#e05050" stroke-width="2" />
<line x1="62" y1="325.5" x2="67" y2="325.5" stroke="#e05050" stroke-width="2" />
<line x1="62" y1="341" x2="67" y2="341" stroke="#e05050" stroke-width="2" />
<line x1="62" y1="354.7" x2="67" y2="354.7" stroke="#e05050" stroke-width="2" />
<line x1="62" y1="414.9" x2="67" y2="414.9" stroke="#e05050" stroke-width="2" />
<line x1="62" y1="425.6" x2="67" y2="425.6" stroke="#e05050" stroke-width="2" />
<line x1="62" y1="435" x2="67" y2="435" stroke="#e05050" stroke-width="2" />
<line x1="62" y1="522" x2="67" y2="522" stroke="#e05050" stroke-width="2" />
<line x1="62" y1="528.8" x2="67" y2="528.8" stroke="#e05050" stroke-width="2" />
<line x1="62" y1="535.5" x2="67" y2="535.5" stroke="#e05050" stroke-width="2" />
<line x1="62" y1="542" x2="67" y2="542" stroke="#e05050" stroke-width="2" />
<line x1="62" y1="549" x2="67" y2="549" stroke="#e05050" stroke-width="2" />
<line x1="62" y1="149.6" x2="67" y2="149.6" stroke="#e05050" stroke-width="2" />
<line x1="62" y1="187.7" x2="67" y2="187.7" stroke="#e05050" stroke-width="2" />
<line x1="62" y1="211.6" x2="67" y2="211.6" stroke="#e05050" stroke-width="2" />
<line x1="60" y1="71.5" x2="64" y2="71.5" stroke="#2050d0" stroke-width="2" />
<line x1="60" y1="114.7" x2="64" y2="114.7" stroke="#2050d0" stroke-width="2" />
<line x1="60" y1="367.6" x2="64" y2="367.6" stroke="#2050d0" stroke-width="2" />
<line x1="60" y1="380.8" x2="64" y2="380.8" stroke="#2050d0" stroke-width="2" />
<line x1="60" y1="393" x2="64" y2="393" stroke="#2050d0" stroke-width="2" />
<line x1="60" y1="404" x2="64" y2="404" stroke="#2050d0" stroke-width="2" />
<line x1="60" y1="443" x2="64" y2="443" stroke="#2050d0" stroke-width="2" />
<line x1="60" y1="453.7" x2="64" y2="453.7" stroke="#2050d0" stroke-width="2" />
<line x1="60" y1="461.8" x2="64" y2="461.8" stroke="#2050d0" stroke-width="2" />
<line x1="60" y1="469.8" x2="64" y2="469.8" stroke="#2050d0" stroke-width="2" />
<line x1="60" y1="494" x2="64" y2="494" stroke="#2050d0" stroke-width="2" />
<line x1="60" y1="502" x2="64" y2="502" stroke="#2050d0" stroke-width="2" />
<line x1="60" y1="508.7" x2="64" y2="508.7" stroke="#2050d0" stroke-width="2" />
<line x1="60" y1="515.4" x2="64" y2="515.4" stroke="#2050d0" stroke-width="2" />
<line x1="57" y1="479.2" x2="63" y2="479.2" stroke="#2050d0" stroke-width="2" />
<line x1="57" y1="486.7" x2="63" y2="486.7" stroke="#2050d0" stroke-width="2" />
<line x1="32" y1="68" x2="41" y2="68" stroke="#a00000" stroke-width="2" />
<text x="46.5" y="72" fill="#ff0000" font-size="11" text-anchor="start" textLength="26.6" lengthAdjust="spacingAndGlyphs" >15 km</text>
<line x1="32" y1="181" x2="41" y2="181" stroke="#a00000" stroke-width="2" />
<text x="46.5" y="185" fill="#ff0000" font-size="11" text-anchor="start" textLength="26.6" lengthAdjust="spacingAndGlyphs" >12 km</text>
<line x1="32" y1="286" x2="41" y2="286" stroke="#a00000" stroke-width="2" />
<text x="46.5" y="290" fill="#ff0000" font-size="11" text-anchor="start" textLength="21.2" lengthAdjust="spacingAndGlyphs" >9 km</text>
<line x1="32" y1="381" x2="41" y2="381" stroke="#a00000" stroke-width="2" />
<text x="46.5" y="385" fill="#ff0000" font-size="11" text-anchor="start" textLength="21.2" lengthAdjust="spacingAndGlyphs" >6 km</text>
<line x1="32" y1="468.2" x2="41" y2="468.2" stroke="#a00000" stroke-width="2" />
<text x="46.5" y="472.2" fill="#ff0000" font-size="11" text-anchor="start" textLength="21.2" lengthAdjust="spacingAndGlyphs" >3 km</text>
<line x1="32" y1="522" x2="41" y2="522" stroke="#a00000" stroke-width="2" />
<text x="46.5" y="526" fill="#ff0000" font-size="11" text-anchor="start" textLength="21.2" lengthAdjust="spacingAndGlyphs" >1 km</text>
<line x1="32" y1="549.2" x2="41" y2="549.2" stroke="#a00000" stroke-width="2" />
<text x="46.5" y="553.2" fill="#ff0000" font-size="11" text-anchor="start" textLength="21.2" lengthAdjust="spacingAndGlyphs" >0 km</text>
<g clip-path="url(#skc)">
<polyline points="331,426 344.4,454.1 357.6,493 369.9,550.2" fill="none" stroke="#e020e0" stroke-width="1.5" stroke-linejoin="round" stroke-dasharray="4 3"/>
<polyline points="141,19 142.3,21 184,100 210.6,140 301.7,274.3 326.3,317.2 348.7,362.2 371.2,417.3 380.1,447 391.4,489.9 400.6,522.6" fill="none" stroke="#1e8cff" stroke-width="2.7" stroke-linejoin="round" stroke-dasharray="8 4"/>
<polyline points="302,340 317,385 331,402 360.5,432 384,454.9 403.5,478.1 414,489 418,496.3 419.3,503 416.5,509.6 403,521.2 432.9,549.4" fill="none" stroke="#ff2020" stroke-width="1.5" stroke-linejoin="round" stroke-dasharray="5 3"/>
<polyline points="400.6,522.6 433.2,550.2" fill="none" stroke="#1e8cff" stroke-width="1.5" stroke-linejoin="round" stroke-dasharray="5 3" stroke-dashoffset="5"/>
<polyline points="293,19 292,21 256,72.5 223.5,114.5 213,148.3 218,180.5 226.7,203.4 256.8,260 286.4,307 299.7,347.9 302.8,362.2 309.9,380.6 318,390.8 321.1,403 335.2,432.7 336.2,443.9 351.5,454.1 369.9,494 382.2,509.3 374,515.4 387.3,524.6 397.5,549.2" fill="none" stroke="#20d8e0" stroke-width="1" stroke-linejoin="round" />
<polyline points="296.6,19 295.2,21 258,73.6 223.2,115 212.4,148.3 217.5,180.5 235.9,221.8 242.8,235.6 258.8,260 290.5,308 301.7,337.6 306.8,362.2 312,376.5 322.2,392.8 327,400 356.5,430 376.5,451.6 394.7,471.5 406.3,486.4 411.3,499.7 406.3,511.3 391.4,521.2 394.7,527.8 417.1,548.6" fill="none" stroke="#9a0000" stroke-width="3.1" stroke-linejoin="round" />
<polyline points="193,19 192.1,21 171.4,72.9 176,99.8 179.5,149.4 187.6,180.5 202.5,215 219.8,249.4 226.1,260 235.3,274.3 251.7,293.7 271.1,311.1 281.3,329.5 295.6,364.2 302.8,382.6 313,392.8 303.8,404 301.5,424.5 291.2,443.9 328,454.1 334.1,467.4 346.4,493 369.9,509.3 359.7,515.4 378.1,522.6 384.2,534.9 388.3,549.2" fill="none" stroke="#00bb00" stroke-width="3.5" stroke-linejoin="round" />
</g>
<line x1="466" y1="142.8" x2="488" y2="142.8" stroke="#ff00ff" stroke-width="2.5" />
<text x="469.5" y="141.8" fill="#ff00ff" font-size="12" text-anchor="start" >EL</text>
<line x1="466" y1="453.8" x2="488" y2="453.8" stroke="#ffee00" stroke-width="2.5" />
<text x="466" y="451.5" fill="#ffee00" font-size="12" text-anchor="start" >LFC</text>
<line x1="466" y1="523" x2="488" y2="523" stroke="#00ee00" stroke-width="2.5" />
<text x="466" y="534.3" fill="#00ee00" font-size="12" text-anchor="start" >LCL</text>
<line x1="466" y1="302" x2="488" y2="302" stroke="#1e78ff" stroke-width="2.5" />
<text x="466.6" y="299.6" fill="#1e78ff" font-size="11" text-anchor="start" textLength="63.3" lengthAdjust="spacingAndGlyphs" >-30 C=28551'</text>
<line x1="466" y1="354.9" x2="488" y2="354.9" stroke="#1e78ff" stroke-width="2.5" />
<text x="466.6" y="352.5" fill="#1e78ff" font-size="11" text-anchor="start" textLength="63.3" lengthAdjust="spacingAndGlyphs" >-20 C=23082'</text>
<line x1="466" y1="431.1" x2="488" y2="431.1" stroke="#1e78ff" stroke-width="2.5" />
<text x="466.6" y="428.7" fill="#1e78ff" font-size="11" text-anchor="start" textLength="53.7" lengthAdjust="spacingAndGlyphs" >0 C=14777'</text>
<rect x="397" y="386" width="52" height="12" fill="#000" stroke="none" stroke-width="1" />
<text transform="translate(397.6,395.6) scale(0.97,1)" fill="#e000e0" font-size="11" text-anchor="start" >9.1 C/km</text>
<line x1="402" y1="403.7" x2="424" y2="403.7" stroke="#e000e0" stroke-width="2.5" />
<line x1="402" y1="460.9" x2="424" y2="460.9" stroke="#e000e0" stroke-width="2.5" />
<line x1="413" y1="403.7" x2="413" y2="460.9" stroke="#e000e0" stroke-width="2.5" />
<text transform="translate(120.6,528) scale(0.97,1)" fill="#00e0e0" font-size="11" text-anchor="start" >526m</text>
<text transform="translate(170,528) scale(0.97,1)" fill="#00e0e0" font-size="11" text-anchor="start" >116 m2s2</text>
<line x1="169" y1="534.7" x2="201" y2="534.7" stroke="#00e0e0" stroke-width="2.5" />
<line x1="169" y1="548.9" x2="201" y2="548.9" stroke="#00e0e0" stroke-width="2.5" />
<line x1="185" y1="534.7" x2="185" y2="548.9" stroke="#00e0e0" stroke-width="2.5" />
<clipPath id="barbc"><rect x="500" y="22" width="100" height="560"/></clipPath>
<g clip-path="url(#barbc)" stroke-linecap="round" stroke-linejoin="round">
<path d="M557.6,25.5 L532.7,28.4 M532.7,28.4 L531.5,18.5 M536.7,27.9 L535.5,18 M540.6,27.5 L539.5,17.5" fill="none" stroke="#40ff00" stroke-width="1.35"/>
<path d="M557.6,102.3 L532.3,103.4 M532.3,103.4 L531.9,93.4 L538.3,103.1 M539.3,103.1 L539.1,97.6" fill="none" stroke="#ff8c00" stroke-width="1.35"/>
<path d="M557.6,159.5 L532.4,158.7 M532.4,158.7 L532.7,148.7 L538.4,158.9 M539.4,158.9 L539.7,148.9" fill="none" stroke="#ff5a00" stroke-width="1.35"/>
<path d="M557.6,205.6 L532.4,202.5 M532.4,202.5 L533.6,192.6 L538.4,203.2 M539.3,203.4 L540.6,193.4 M543.3,203.8 L544.5,193.9" fill="none" stroke="#ff2000" stroke-width="1.35"/>
<path d="M557.6,243.8 L532.4,241.9 M532.4,241.9 L533.2,231.9 L538.4,242.4 M539.4,242.4 L540.1,232.5 M543.4,242.7 L543.8,237.2" fill="none" stroke="#ff1000" stroke-width="1.35"/>
<path d="M557,275.8 L532.4,276.7 M532.4,276.7 L532,266.7 L538.4,276.5 M539.4,276.4 L539,266.5" fill="none" stroke="#ff0000" stroke-width="1.35"/>
<path d="M557,305.5 L532.4,306.4 M532.4,306.4 L532,296.4 L538.4,306.2 M539.4,306.1 L539,296.2" fill="none" stroke="#ff0800" stroke-width="1.35"/>
<path d="M557.9,331.3 L532,334 M532,334 L531,324.1 L538,333.4 M539,333.3 L538.4,327.8" fill="none" stroke="#ff4a10" stroke-width="1.35"/>
<path d="M557.9,353.6 L532,357 M532,357 L530.7,347.1 L537.9,356.2 M538.9,356.1 L538.2,350.6" fill="none" stroke="#ff5410" stroke-width="1.35"/>
<path d="M557.9,375 L532,379.5 M532,379.5 L530.3,369.6 L537.9,378.5 M538.9,378.3 L538,372.9" fill="none" stroke="#ff5e10" stroke-width="1.35"/>
<path d="M557.9,393.8 L532,399 M532,399 L530,389.2 L537.9,397.8 M538.9,397.6 L537.8,392.2" fill="none" stroke="#ff8a00" stroke-width="1.35"/>
<path d="M557.9,411.6 L532,415 M532,415 L530.7,405.1 L537.9,414.2" fill="none" stroke="#ff9600" stroke-width="1.35"/>
<path d="M557.9,427.7 L532,429.5 M532,429.5 L531.3,419.5 L538,429.1 M539,429 L538.6,423.5" fill="none" stroke="#ffa000" stroke-width="1.35"/>
<path d="M557.9,443 L532.5,445 M532.5,445 L531.7,435 L538.5,444.5" fill="none" stroke="#ffae00" stroke-width="1.35"/>
<path d="M557.9,458 L532.5,461.6 M532.5,461.6 L531.1,451.7 M536.5,461 L535.1,451.1 M540.4,460.5 L539,450.6 M544.4,459.9 L543.6,454.5" fill="none" stroke="#c8e000" stroke-width="1.35"/>
<path d="M557.9,471.6 L533.3,477.9 M533.3,477.9 L530.8,468.2 M537.2,476.9 L534.7,467.2 M541,475.9 L538.6,466.2" fill="none" stroke="#58e800" stroke-width="1.35"/>
<path d="M557.9,484.5 L534.1,494 M534.1,494 L530.4,484.7 M537.8,492.5 L534.1,483.2 M541.5,491 L537.8,481.7" fill="none" stroke="#48e800" stroke-width="1.35"/>
<path d="M557.9,496.5 L535.8,508.1 M535.8,508.1 L531.2,499.2 M539.3,506.2 L534.7,497.4 M542.9,504.4 L538.2,495.5" fill="none" stroke="#40e800" stroke-width="1.35"/>
<path d="M557,508.5 L538.4,525.4 M538.4,525.4 L531.7,518 M541.4,522.7 L534.6,515.3 M544.3,520 L537.6,512.6" fill="none" stroke="#60ea00" stroke-width="1.35"/>
<path d="M558,518.7 L539.8,538.3 M539.8,538.3 L532.5,531.5 M542.5,535.4 L535.2,528.6 M545.2,532.4 L537.9,525.6" fill="none" stroke="#70ea00" stroke-width="1.35"/>
<path d="M559,528.7 L545.1,549.8 M545.1,549.8 L536.7,544.3 M547.3,546.5 L538.9,541 M549.5,543.1 L541.2,537.6" fill="none" stroke="#50e800" stroke-width="1.35"/>
<path d="M558,538.8 L545.6,561.3 M545.6,561.3 L536.8,556.5 M547.5,557.8 L538.8,553 M549.5,554.3 L540.7,549.5" fill="none" stroke="#30e830" stroke-width="1.35"/>
<path d="M558,548.9 L548,571.8 M548,571.8 L538.8,567.8" fill="none" stroke="#20e890" stroke-width="1.35"/>
</g>
<rect x="590.5" y="24.5" width="60" height="539.5" fill="#000" stroke="none" stroke-width="1" />
<line x1="597.9" y1="25" x2="597.9" y2="563" stroke="#76482c" stroke-width="1.7" stroke-dasharray="4 2"/>
<line x1="606.9" y1="25" x2="606.9" y2="563" stroke="#76482c" stroke-width="1.7" stroke-dasharray="4 2"/>
<line x1="615.8" y1="25" x2="615.8" y2="563" stroke="#76482c" stroke-width="1.7" stroke-dasharray="4 2"/>
<line x1="624.1" y1="25" x2="624.1" y2="563" stroke="#76482c" stroke-width="1.7" stroke-dasharray="4 2"/>
<line x1="633" y1="25" x2="633" y2="563" stroke="#76482c" stroke-width="1.7" stroke-dasharray="4 2"/>
<line x1="642" y1="25" x2="642" y2="563" stroke="#76482c" stroke-width="1.7" stroke-dasharray="4 2"/>
<line x1="590.5" y1="25" x2="590.5" y2="564" stroke="#fff" stroke-width="1" stroke-dasharray="4 2"/>
<line x1="590.5" y1="24.7" x2="651" y2="24.7" stroke="#fff" stroke-width="1" />
<line x1="651" y1="24" x2="651" y2="564" stroke="#fff" stroke-width="2" />
<text x="593" y="34" fill="#fff" font-size="9.5" text-anchor="start" textLength="44.5" lengthAdjust="spacingAndGlyphs" >Wind Speed</text>
<text x="593" y="44" fill="#fff" font-size="9.5" text-anchor="start" textLength="28" lengthAdjust="spacingAndGlyphs" >(knots)</text>
<line x1="590" y1="24.6" x2="602" y2="24.6" stroke="#00e8f0" stroke-width="2.5" />
<line x1="590" y1="74.7" x2="607.8" y2="74.7" stroke="#00e8f0" stroke-width="2.5" />
<line x1="590" y1="116.6" x2="617" y2="116.6" stroke="#00e8f0" stroke-width="2.5" />
<line x1="590" y1="152" x2="618.8" y2="152" stroke="#00e8f0" stroke-width="2.5" />
<line x1="590" y1="183" x2="619" y2="183" stroke="#00e8f0" stroke-width="2.5" />
<line x1="590" y1="210.1" x2="620.8" y2="210.1" stroke="#00e8f0" stroke-width="2.5" />
<line x1="590" y1="234.2" x2="619" y2="234.2" stroke="#00e8f0" stroke-width="2.5" />
<line x1="590" y1="256.1" x2="618" y2="256.1" stroke="#00e8f0" stroke-width="2.5" />
<line x1="590" y1="276" x2="618" y2="276" stroke="#00e8f0" stroke-width="2.5" />
<line x1="590" y1="294.8" x2="617" y2="294.8" stroke="#ffee00" stroke-width="2.5" />
<line x1="590" y1="311.9" x2="617" y2="311.9" stroke="#ffee00" stroke-width="2.5" />
<line x1="590" y1="327.7" x2="616" y2="327.7" stroke="#ffee00" stroke-width="2.5" />
<line x1="590" y1="341.8" x2="615" y2="341.8" stroke="#ffee00" stroke-width="2.5" />
<line x1="590" y1="355.9" x2="615" y2="355.9" stroke="#ffee00" stroke-width="2.5" />
<line x1="590" y1="369.6" x2="616" y2="369.6" stroke="#ffee00" stroke-width="2.5" />
<line x1="590" y1="382" x2="615" y2="382" stroke="#22ee00" stroke-width="2.5" />
<line x1="590" y1="393.9" x2="614" y2="393.9" stroke="#22ee00" stroke-width="2.5" />
<line x1="590" y1="404.7" x2="613" y2="404.7" stroke="#22ee00" stroke-width="2.5" />
<line x1="590" y1="415.8" x2="613" y2="415.8" stroke="#22ee00" stroke-width="2.5" />
<line x1="590" y1="425.8" x2="613" y2="425.8" stroke="#22ee00" stroke-width="2.5" />
<line x1="590" y1="435.7" x2="612" y2="435.7" stroke="#22ee00" stroke-width="2.5" />
<line x1="590" y1="444.9" x2="612" y2="444.9" stroke="#22ee00" stroke-width="2.5" />
<line x1="590" y1="454.1" x2="608" y2="454.1" stroke="#22ee00" stroke-width="2.5" />
<line x1="590" y1="463" x2="605" y2="463" stroke="#22ee00" stroke-width="2.5" />
<line x1="590" y1="470.8" x2="603" y2="470.8" stroke="#ff1010" stroke-width="2.5" />
<line x1="590" y1="478.8" x2="602" y2="478.8" stroke="#ff1010" stroke-width="2.5" />
<line x1="590" y1="486.5" x2="602" y2="486.5" stroke="#ff1010" stroke-width="2.5" />
<line x1="590" y1="495" x2="603" y2="495" stroke="#ff1010" stroke-width="2.5" />
<line x1="590" y1="501.8" x2="603" y2="501.8" stroke="#ff1010" stroke-width="2.5" />
<line x1="590" y1="509" x2="604" y2="509" stroke="#ff1010" stroke-width="2.5" />
<line x1="590" y1="515.8" x2="605" y2="515.8" stroke="#ff1010" stroke-width="2.5" />
<line x1="590" y1="522.9" x2="604" y2="522.9" stroke="#ff1010" stroke-width="2.5" />
<line x1="590" y1="529.1" x2="603" y2="529.1" stroke="#ee00ee" stroke-width="2.5" />
<line x1="590" y1="535" x2="602" y2="535" stroke="#ee00ee" stroke-width="2.5" />
<line x1="590" y1="540.9" x2="601" y2="540.9" stroke="#ee00ee" stroke-width="2.5" />
<path d="M590,546 H597 V548 H596 V549.8 H590 Z" fill="#ee00ee"/>
<text transform="translate(605.2,579) scale(0.97,1)" fill="#fff" font-size="11" text-anchor="middle" >40</text>
<text transform="translate(623.5,579) scale(0.97,1)" fill="#fff" font-size="11" text-anchor="middle" >80</text>
<text transform="translate(641.2,579) scale(0.97,1)" fill="#fff" font-size="11" text-anchor="middle" >120</text>
<line x1="670.3" y1="25" x2="670.3" y2="564" stroke="#a0a0a0" stroke-width="1.5" stroke-dasharray="4 2"/>
<line x1="692" y1="24" x2="692" y2="565" stroke="#fff" stroke-width="2" />
<line x1="651" y1="24.7" x2="692" y2="24.7" stroke="#fff" stroke-width="1" />
<text x="653" y="34" fill="#fff" font-size="9.5" text-anchor="start" textLength="35.5" lengthAdjust="spacingAndGlyphs" >Inf. Temp.</text>
<text x="653" y="44" fill="#fff" font-size="9.5" text-anchor="start" textLength="34" lengthAdjust="spacingAndGlyphs" >Adv. (C/</text>
<text x="653" y="53" fill="#fff" font-size="9.5" text-anchor="start" textLength="9.5" lengthAdjust="spacingAndGlyphs" >hr)</text>
<rect x="671.6" y="161" width="0" height="101" fill="none" stroke="#ff0000" stroke-width="1.4" />
<rect x="671.6" y="262" width="2.4" height="70.3" fill="none" stroke="#ff0000" stroke-width="1.4" />
<rect x="671.6" y="332.3" width="2.4" height="53.2" fill="none" stroke="#ff0000" stroke-width="1.4" />
<rect x="671.6" y="429.4" width="2.8" height="35.6" fill="none" stroke="#ff0000" stroke-width="1.4" />
<rect x="671.6" y="465" width="3.8" height="33.7" fill="none" stroke="#ff0000" stroke-width="1.4" />
<rect x="671.6" y="498.7" width="4.8" height="25.3" fill="none" stroke="#ff0000" stroke-width="1.4" />
<rect x="671.6" y="524" width="1.9" height="25.6" fill="none" stroke="#ff0000" stroke-width="1.4" />
<rect x="667.4" y="385.5" width="3.6" height="43.9" fill="none" stroke="#3a9ad9" stroke-width="1.3" />
<text transform="translate(681,219) scale(0.97,1)" fill="#ff0000" font-size="9" text-anchor="middle" >0.2</text>
<text transform="translate(681,304) scale(0.97,1)" fill="#ff0000" font-size="9" text-anchor="middle" >2.0</text>
<text transform="translate(681,366) scale(0.97,1)" fill="#ff0000" font-size="9" text-anchor="middle" >1.8</text>
<text transform="translate(681,455) scale(0.97,1)" fill="#ff0000" font-size="9" text-anchor="middle" >2.0</text>
<text transform="translate(681,488) scale(0.97,1)" fill="#ff0000" font-size="9" text-anchor="middle" >2.4</text>
<text transform="translate(681,518.5) scale(0.97,1)" fill="#ff0000" font-size="9" text-anchor="middle" >3.0</text>
<text transform="translate(681,544) scale(0.97,1)" fill="#ff0000" font-size="9" text-anchor="middle" >1.4</text>
<text transform="translate(659,415) scale(0.97,1)" fill="#3090d0" font-size="9" text-anchor="middle" >-2.8</text>
<path d="M31,565 V21 H589.5 V565" fill="none" stroke="#fff" stroke-width="2"/>
<line x1="30" y1="564.5" x2="590" y2="564.5" stroke="#fff" stroke-width="2" />
<rect x="120" y="553" width="28" height="13" fill="#000" stroke="none" stroke-width="1" />
<text transform="translate(134,564) scale(0.97,1)" fill="#00e0e0" font-size="11" text-anchor="middle" >SFC</text>
<rect x="379" y="553.5" width="47" height="11" fill="#000" stroke="none" stroke-width="1" />
<text x="381.7" y="564" fill="#00ee00" font-size="11" text-anchor="start" textLength="11.5" lengthAdjust="spacingAndGlyphs" >69</text>
<text x="396" y="564" fill="#00e0e0" font-size="11" text-anchor="start" textLength="5.5" lengthAdjust="spacingAndGlyphs" >2</text>
<text x="411.5" y="564" fill="#ff0000" font-size="11" text-anchor="start" textLength="10.5" lengthAdjust="spacingAndGlyphs" >79</text>
<rect x="405" y="563.5" width="4" height="2.5" fill="#fff" stroke="none" stroke-width="1" />
<g clip-path="url(#hodc)">
<circle cx="935" cy="228" r="30.4" fill="none" stroke="#7c7c7c" stroke-width="1" stroke-dasharray="4 3"/>
<circle cx="935" cy="228" r="60.9" fill="none" stroke="#7c7c7c" stroke-width="1" stroke-dasharray="4 3"/>
<circle cx="935" cy="228" r="91.3" fill="none" stroke="#7c7c7c" stroke-width="1" stroke-dasharray="4 3"/>
<circle cx="935" cy="228" r="121.8" fill="none" stroke="#7c7c7c" stroke-width="1" stroke-dasharray="4 3"/>
<circle cx="935" cy="228" r="152.2" fill="none" stroke="#7c7c7c" stroke-width="1" stroke-dasharray="4 3"/>
<circle cx="935" cy="228" r="182.7" fill="none" stroke="#7c7c7c" stroke-width="1" stroke-dasharray="4 3"/>
<circle cx="935" cy="228" r="213.2" fill="none" stroke="#7c7c7c" stroke-width="1" stroke-dasharray="4 3"/>
<circle cx="935" cy="228" r="243.6" fill="none" stroke="#7c7c7c" stroke-width="1" stroke-dasharray="4 3"/>
<circle cx="935" cy="228" r="274.1" fill="none" stroke="#7c7c7c" stroke-width="1" stroke-dasharray="4 3"/>
<circle cx="935" cy="228" r="304.5" fill="none" stroke="#7c7c7c" stroke-width="1" stroke-dasharray="4 3"/>
<line x1="693" y1="228" x2="1179" y2="228" stroke="#5c5c5c" stroke-width="2" stroke-dasharray="4 3"/>
<line x1="935" y1="25" x2="935" y2="430" stroke="#5c5c5c" stroke-width="2" stroke-dasharray="4 3"/>
<text transform="translate(905.5,245) scale(0.97,1)" fill="#fff" font-size="11" text-anchor="middle" >10</text>
<text transform="translate(968,245) scale(0.97,1)" fill="#fff" font-size="11" text-anchor="middle" >10</text>
<text transform="translate(875.1,245) scale(0.97,1)" fill="#fff" font-size="11" text-anchor="middle" >20</text>
<text transform="translate(998.4,245) scale(0.97,1)" fill="#fff" font-size="11" text-anchor="middle" >20</text>
<text transform="translate(844.6,245) scale(0.97,1)" fill="#fff" font-size="11" text-anchor="middle" >30</text>
<text transform="translate(1028.8,245) scale(0.97,1)" fill="#fff" font-size="11" text-anchor="middle" >30</text>
<text transform="translate(814.2,245) scale(0.97,1)" fill="#fff" font-size="11" text-anchor="middle" >40</text>
<text transform="translate(1059.3,245) scale(0.97,1)" fill="#fff" font-size="11" text-anchor="middle" >40</text>
<text transform="translate(783.8,245) scale(0.97,1)" fill="#fff" font-size="11" text-anchor="middle" >50</text>
<text transform="translate(1089.8,245) scale(0.97,1)" fill="#fff" font-size="11" text-anchor="middle" >50</text>
<text transform="translate(753.3,245) scale(0.97,1)" fill="#fff" font-size="11" text-anchor="middle" >60</text>
<text transform="translate(1120.2,245) scale(0.97,1)" fill="#fff" font-size="11" text-anchor="middle" >60</text>
<text transform="translate(722.9,245) scale(0.97,1)" fill="#fff" font-size="11" text-anchor="middle" >70</text>
<text transform="translate(1150.7,245) scale(0.97,1)" fill="#fff" font-size="11" text-anchor="middle" >70</text>
<text transform="translate(947.5,204.1) scale(0.97,1)" fill="#fff" font-size="11" text-anchor="middle" >10</text>
<text transform="translate(947.5,264.9) scale(0.97,1)" fill="#fff" font-size="11" text-anchor="middle" >10</text>
<text transform="translate(947.5,173.6) scale(0.97,1)" fill="#fff" font-size="11" text-anchor="middle" >20</text>
<text transform="translate(947.5,295.4) scale(0.97,1)" fill="#fff" font-size="11" text-anchor="middle" >20</text>
<text transform="translate(947.5,143.2) scale(0.97,1)" fill="#fff" font-size="11" text-anchor="middle" >30</text>
<text transform="translate(947.5,325.9) scale(0.97,1)" fill="#fff" font-size="11" text-anchor="middle" >30</text>
<text transform="translate(947.5,112.7) scale(0.97,1)" fill="#fff" font-size="11" text-anchor="middle" >40</text>
<text transform="translate(947.5,356.3) scale(0.97,1)" fill="#fff" font-size="11" text-anchor="middle" >40</text>
<text transform="translate(947.5,82.2) scale(0.97,1)" fill="#fff" font-size="11" text-anchor="middle" >50</text>
<text transform="translate(947.5,386.8) scale(0.97,1)" fill="#fff" font-size="11" text-anchor="middle" >50</text>
<text transform="translate(947.5,51.8) scale(0.97,1)" fill="#fff" font-size="11" text-anchor="middle" >60</text>
<text transform="translate(947.5,417.2) scale(0.97,1)" fill="#fff" font-size="11" text-anchor="middle" >60</text>
<text transform="translate(697,245) scale(0.97,1)" fill="#fff" font-size="11" text-anchor="middle" >0</text>
<text transform="translate(1176,245) scale(0.97,1)" fill="#fff" font-size="11" text-anchor="middle" >0</text>
<line x1="948.9" y1="194.3" x2="1029.4" y2="229.4" stroke="#20c0c8" stroke-width="1.3" />
<line x1="977" y1="156.6" x2="1029.4" y2="229.4" stroke="#20c0c8" stroke-width="1.3" />
<polyline points="948.9,194.3 969.4,163.6 977,156.6 983.4,153.4 991.1,151.7" fill="none" stroke="#ff00ff" stroke-width="3" stroke-linejoin="round" />
<polyline points="991.1,151.7 1009,159.8 1008.6,167.5 1005.1,173.8 1005.8,182.8 1009,191.1 1014.1,198.7 1024.3,204.5" fill="none" stroke="#ff0000" stroke-width="3" stroke-linejoin="round" />
<polyline points="1024.3,204.5 1058.3,212.1 1083.9,217.9 1095.4,218.3 1095.4,213.4 1093.4,207 1090.2,199.4 1092.8,191.7 1101.7,183.4" fill="none" stroke="#00ee00" stroke-width="3" stroke-linejoin="round" />
<polyline points="1101.7,183.4 1108.8,198.7 1108.1,204.5 1104.9,204.2 1108.1,205.5 1120.9,206.4 1124.7,221.1" fill="none" stroke="#ffee00" stroke-width="3" stroke-linejoin="round" />
<polyline points="1124.7,221.1 1127.3,233.2 1134.9,245.4 1143.2,253.7 1129.8,246.6" fill="none" stroke="#00e0f0" stroke-width="3" stroke-linejoin="round" />
<circle cx="1039.6" cy="142.2" r="3.2" fill="none" stroke="#2d95d5" stroke-width="1.5"/>
<text x="1042.4" y="158" fill="#2d95d5" font-size="11" text-anchor="start" textLength="51" lengthAdjust="spacingAndGlyphs" >231/44 LM</text>
<rect x="1054" y="200" width="7.5" height="7.5" fill="none" stroke="#c8860a" stroke-width="2.5" />
<text x="1063.2" y="211.5" fill="#c8860a" font-size="11" text-anchor="start" textLength="31.5" lengthAdjust="spacingAndGlyphs" >256/42</text>
<circle cx="1029.4" cy="230.7" r="3" fill="none" stroke="#d85050" stroke-width="1.5"/>
<text x="1032.8" y="245.6" fill="#ff6060" font-size="11" text-anchor="start" textLength="51" lengthAdjust="spacingAndGlyphs" >272/30 RM</text>
<circle cx="1022.1" cy="266.3" r="3.5" fill="none" stroke="#fff" stroke-width="2"/>
<text x="1026.9" y="277.5" fill="#fff" font-size="11" text-anchor="start" textLength="49" lengthAdjust="spacingAndGlyphs" >UP=294/31</text>
<circle cx="1157.3" cy="238.3" r="3.5" fill="none" stroke="#fff" stroke-width="2"/>
<text transform="translate(1160.5,249.2) scale(0.97,1)" fill="#fff" font-size="11" text-anchor="start" >DN</text>
<text x="707" y="406" fill="#00e0e0" font-size="11" text-anchor="start" textLength="88" lengthAdjust="spacingAndGlyphs" >Critical Angle = 78°</text>
</g>
<path d="M692.5,24.5 H1178.5 V431" fill="none" stroke="#fff" stroke-width="2"/>
<path d="M692,432 H1178.5 V565 H692 M813,432 V565 M935,432 V565 M1057,432 V565" fill="none" stroke="#fff" stroke-width="2"/>
<line x1="752" y1="433" x2="752" y2="564" stroke="#003c80" stroke-width="2" />
<line x1="693" y1="498" x2="812" y2="498" stroke="#003c80" stroke-width="2" />
<circle cx="752" cy="497.5" r="5" fill="none" stroke="#00ee00" stroke-width="1.3"/>
<circle cx="754.5" cy="496.5" r="5" fill="none" stroke="#00ee00" stroke-width="1.3"/>
<circle cx="757" cy="495.5" r="5" fill="none" stroke="#00ee00" stroke-width="1.3"/>
<circle cx="759.5" cy="494.6" r="5" fill="none" stroke="#00ee00" stroke-width="1.3"/>
<circle cx="762" cy="493.8" r="5" fill="none" stroke="#00ee00" stroke-width="1.3"/>
<circle cx="764.5" cy="493" r="5" fill="none" stroke="#00ee00" stroke-width="1.3"/>
<circle cx="767" cy="492.2" r="5" fill="none" stroke="#00ee00" stroke-width="1.3"/>
<circle cx="769.5" cy="491.5" r="5" fill="none" stroke="#00ee00" stroke-width="1.3"/>
<circle cx="773.2" cy="490.2" r="5" fill="none" stroke="#e8e000" stroke-width="1.3"/>
<circle cx="776.8" cy="489" r="5" fill="none" stroke="#e8e000" stroke-width="1.3"/>
<circle cx="779.5" cy="488.3" r="5" fill="none" stroke="#e8e000" stroke-width="1.3"/>
<circle cx="782.7" cy="487.2" r="5" fill="none" stroke="#00d8e8" stroke-width="1.3"/>
<circle cx="787.4" cy="487.2" r="5" fill="none" stroke="#00d8e8" stroke-width="1.3"/>
<circle cx="790" cy="487" r="5" fill="none" stroke="#00d8e8" stroke-width="1.3"/>
<circle cx="797" cy="488.4" r="5" fill="none" stroke="#e000e0" stroke-width="1.3"/>
<line x1="751.3" y1="497.9" x2="782.7" y2="499.1" stroke="#fff" stroke-width="3" />
<text transform="translate(806,444) scale(0.97,1)" fill="#fff" font-size="11" text-anchor="end" >73 deg</text>
<text x="697.4" y="562" fill="#fff" font-size="11" text-anchor="start" textLength="57" lengthAdjust="spacingAndGlyphs" >Storm Slinky</text>
<line x1="822.4" y1="432" x2="822.4" y2="438" stroke="#ccc" stroke-width="2" />
<line x1="822.4" y1="559" x2="822.4" y2="565" stroke="#ccc" stroke-width="2" />
<line x1="853.1" y1="432" x2="853.1" y2="438" stroke="#ccc" stroke-width="2" />
<line x1="853.1" y1="559" x2="853.1" y2="565" stroke="#ccc" stroke-width="2" />
<line x1="883.9" y1="432" x2="883.9" y2="438" stroke="#ccc" stroke-width="2" />
<line x1="883.9" y1="559" x2="883.9" y2="565" stroke="#ccc" stroke-width="2" />
<line x1="914.6" y1="432" x2="914.6" y2="438" stroke="#ccc" stroke-width="2" />
<line x1="914.6" y1="559" x2="914.6" y2="565" stroke="#ccc" stroke-width="2" />
<line x1="813" y1="452.5" x2="819" y2="452.5" stroke="#ccc" stroke-width="2" />
<line x1="929" y1="452.5" x2="935" y2="452.5" stroke="#ccc" stroke-width="2" />
<text x="819.5" y="456" fill="#fff" font-size="9" text-anchor="start" textLength="14" lengthAdjust="spacingAndGlyphs" >500</text>
<line x1="813" y1="474" x2="819" y2="474" stroke="#ccc" stroke-width="2" />
<line x1="929" y1="474" x2="935" y2="474" stroke="#ccc" stroke-width="2" />
<text x="819.5" y="477.5" fill="#fff" font-size="9" text-anchor="start" textLength="14" lengthAdjust="spacingAndGlyphs" >600</text>
<line x1="813" y1="495" x2="819" y2="495" stroke="#ccc" stroke-width="2" />
<line x1="929" y1="495" x2="935" y2="495" stroke="#ccc" stroke-width="2" />
<text x="819.5" y="498.5" fill="#fff" font-size="9" text-anchor="start" textLength="14" lengthAdjust="spacingAndGlyphs" >700</text>
<line x1="813" y1="517" x2="819" y2="517" stroke="#ccc" stroke-width="2" />
<line x1="929" y1="517" x2="935" y2="517" stroke="#ccc" stroke-width="2" />
<text x="819.5" y="520.5" fill="#fff" font-size="9" text-anchor="start" textLength="14" lengthAdjust="spacingAndGlyphs" >800</text>
<line x1="813" y1="538" x2="819" y2="538" stroke="#ccc" stroke-width="2" />
<line x1="929" y1="538" x2="935" y2="538" stroke="#ccc" stroke-width="2" />
<text x="819.5" y="541.5" fill="#fff" font-size="9" text-anchor="start" textLength="14" lengthAdjust="spacingAndGlyphs" >900</text>
<line x1="813" y1="559" x2="819" y2="559" stroke="#ccc" stroke-width="2" />
<line x1="929" y1="559" x2="935" y2="559" stroke="#ccc" stroke-width="2" />
<text x="819.5" y="562.5" fill="#fff" font-size="9" text-anchor="start" textLength="19" lengthAdjust="spacingAndGlyphs" >1000</text>
<text x="823.9" y="558.5" fill="#fff" font-size="9" text-anchor="start" textLength="14" lengthAdjust="spacingAndGlyphs" >320</text>
<text x="854.6" y="558.5" fill="#fff" font-size="9" text-anchor="start" textLength="14" lengthAdjust="spacingAndGlyphs" >330</text>
<text x="884.6" y="558.5" fill="#fff" font-size="9" text-anchor="start" textLength="14" lengthAdjust="spacingAndGlyphs" >340</text>
<text x="915" y="558.5" fill="#fff" font-size="9" text-anchor="start" textLength="14" lengthAdjust="spacingAndGlyphs" >350</text>
<text x="857" y="465" fill="#fff" font-size="9" text-anchor="start" textLength="30" lengthAdjust="spacingAndGlyphs" >Theta-E</text>
<text transform="translate(873.3,475.5) scale(0.97,1)" fill="#fff" font-size="9" text-anchor="middle" >v.</text>
<text x="864" y="485.5" fill="#fff" font-size="9" text-anchor="start" textLength="19" lengthAdjust="spacingAndGlyphs" >Pres</text>
<polyline points="858.4,432 847.8,446.2 849.3,452.5 847.2,456.8 847.2,468.4 843.6,479 861.6,485.4 866.9,490.7 868,494.9 873.3,500.2 877.5,509.7 897.6,522 872.6,526.7 889.2,532 901.9,540.5 913.5,553.8" fill="none" stroke="#ffee00" stroke-width="2.5" stroke-linejoin="round" />
<line x1="951.2" y1="432" x2="951.2" y2="438" stroke="#ccc" stroke-width="2" />
<line x1="951.2" y1="559" x2="951.2" y2="565" stroke="#ccc" stroke-width="2" />
<line x1="968.1" y1="432" x2="968.1" y2="438" stroke="#ccc" stroke-width="2" />
<line x1="968.1" y1="559" x2="968.1" y2="565" stroke="#ccc" stroke-width="2" />
<line x1="984" y1="432" x2="984" y2="438" stroke="#ccc" stroke-width="2" />
<line x1="984" y1="559" x2="984" y2="565" stroke="#ccc" stroke-width="2" />
<line x1="1001" y1="432" x2="1001" y2="438" stroke="#ccc" stroke-width="2" />
<line x1="1001" y1="559" x2="1001" y2="565" stroke="#ccc" stroke-width="2" />
<line x1="1016.9" y1="432" x2="1016.9" y2="438" stroke="#ccc" stroke-width="2" />
<line x1="1016.9" y1="559" x2="1016.9" y2="565" stroke="#ccc" stroke-width="2" />
<line x1="1033.8" y1="432" x2="1033.8" y2="438" stroke="#ccc" stroke-width="2" />
<line x1="1033.8" y1="559" x2="1033.8" y2="565" stroke="#ccc" stroke-width="2" />
<line x1="1050.8" y1="432" x2="1050.8" y2="438" stroke="#ccc" stroke-width="2" />
<line x1="1050.8" y1="559" x2="1050.8" y2="565" stroke="#ccc" stroke-width="2" />
<line x1="935" y1="545.8" x2="941" y2="545.8" stroke="#bbb" stroke-width="2" />
<line x1="1051" y1="545.8" x2="1057" y2="545.8" stroke="#bbb" stroke-width="2" />
<line x1="935" y1="528.9" x2="941" y2="528.9" stroke="#bbb" stroke-width="2" />
<line x1="1051" y1="528.9" x2="1057" y2="528.9" stroke="#bbb" stroke-width="2" />
<line x1="935" y1="512" x2="941" y2="512" stroke="#bbb" stroke-width="2" />
<line x1="1051" y1="512" x2="1057" y2="512" stroke="#bbb" stroke-width="2" />
<line x1="935" y1="495.1" x2="941" y2="495.1" stroke="#bbb" stroke-width="2" />
<line x1="1051" y1="495.1" x2="1057" y2="495.1" stroke="#bbb" stroke-width="2" />
<line x1="935" y1="478.2" x2="941" y2="478.2" stroke="#bbb" stroke-width="2" />
<line x1="1051" y1="478.2" x2="1057" y2="478.2" stroke="#bbb" stroke-width="2" />
<line x1="935" y1="461.3" x2="941" y2="461.3" stroke="#bbb" stroke-width="2" />
<line x1="1051" y1="461.3" x2="1057" y2="461.3" stroke="#bbb" stroke-width="2" />
<line x1="935" y1="444.4" x2="941" y2="444.4" stroke="#bbb" stroke-width="2" />
<line x1="1051" y1="444.4" x2="1057" y2="444.4" stroke="#bbb" stroke-width="2" />
<text x="944.5" y="447.9" fill="#fff" font-size="9.5" text-anchor="start" textLength="11" lengthAdjust="spacingAndGlyphs" >14</text>
<text x="944.5" y="464.8" fill="#fff" font-size="9.5" text-anchor="start" textLength="11" lengthAdjust="spacingAndGlyphs" >12</text>
<text x="944.5" y="481.7" fill="#fff" font-size="9.5" text-anchor="start" textLength="11" lengthAdjust="spacingAndGlyphs" >10</text>
<text x="947.3" y="498.6" fill="#fff" font-size="9.5" text-anchor="start" textLength="5.5" lengthAdjust="spacingAndGlyphs" >8</text>
<text x="947.3" y="515.5" fill="#fff" font-size="9.5" text-anchor="start" textLength="5.5" lengthAdjust="spacingAndGlyphs" >6</text>
<text x="947.3" y="532.4" fill="#fff" font-size="9.5" text-anchor="start" textLength="5.5" lengthAdjust="spacingAndGlyphs" >4</text>
<text x="947.3" y="549.3" fill="#fff" font-size="9.5" text-anchor="start" textLength="5.5" lengthAdjust="spacingAndGlyphs" >2</text>
<line x1="958.6" y1="433" x2="958.6" y2="564" stroke="#aaa" stroke-width="1.5" stroke-dasharray="3 2"/>
<line x1="1001" y1="433" x2="1001" y2="495" stroke="#8a1a9a" stroke-width="1.5" stroke-dasharray="3 2"/>
<line x1="1050.8" y1="433" x2="1050.8" y2="495" stroke="#8a1a9a" stroke-width="1.5" stroke-dasharray="3 2"/>
<text x="958" y="448.5" fill="#fff" font-size="9.5" text-anchor="start" textLength="31" lengthAdjust="spacingAndGlyphs" >SR Wind</text>
<text transform="translate(973.4,458) scale(0.97,1)" fill="#fff" font-size="9.5" text-anchor="middle" >v.</text>
<text x="959" y="467.5" fill="#fff" font-size="9.5" text-anchor="start" textLength="29" lengthAdjust="spacingAndGlyphs" >Height</text>
<text x="1006" y="457" fill="#c020d0" font-size="9.5" text-anchor="start" textLength="32" lengthAdjust="spacingAndGlyphs" >Classic</text>
<text x="1001" y="467" fill="#c020d0" font-size="9.5" text-anchor="start" textLength="42" lengthAdjust="spacingAndGlyphs" >Supercell</text>
<polyline points="941.7,432.4 949.1,439.8 985.1,448.3 978.7,455.7 997.8,468.4 987.2,475.8 986.1,492.8 978.7,501.3 981.9,511.9 971.3,518.2 970.3,527.8 949.1,534.1 950.1,537.3 972.4,547.9 981.9,554.2 983,562.7" fill="none" stroke="#ff0000" stroke-width="2.5" stroke-linejoin="round" />
<line x1="988.9" y1="470.6" x2="988.9" y2="488.6" stroke="#9020e0" stroke-width="2.5" />
<line x1="972" y1="511.9" x2="972" y2="529.9" stroke="#6090ff" stroke-width="2.5" />
<line x1="976.6" y1="545.3" x2="976.6" y2="563" stroke="#a00000" stroke-width="2" />
<line x1="1057" y1="452" x2="1178" y2="452" stroke="#fff" stroke-width="2" />
<text x="1067.7" y="447.5" fill="#fff" font-size="11" text-anchor="start" textLength="99.6" lengthAdjust="spacingAndGlyphs" >Potential Hazard Type</text>
<text x="1098.4" y="509.3" fill="#f0b020" font-size="15.5" text-anchor="start" textLength="38.8" lengthAdjust="spacingAndGlyphs" >NONE</text>
<path d="M2.5,588.7 H1178 V781.5 H2.5 Z" fill="none" stroke="#3a9ad9" stroke-width="3"/>
<path d="M298,588.7 V781 M590.8,588.7 V781 M884.8,588.7 V781" fill="none" stroke="#3a9ad9" stroke-width="2"/>
<line x1="4" y1="601.5" x2="297" y2="601.5" stroke="#fff" stroke-width="1.6" />
<line x1="4" y1="652" x2="297" y2="652" stroke="#fff" stroke-width="2" />
<line x1="4" y1="723" x2="297" y2="723" stroke="#fff" stroke-width="2" />
<line x1="204.5" y1="723" x2="204.5" y2="780" stroke="#fff" stroke-width="1.5" />
<rect x="6.1" y="628" width="290.5" height="11.4" fill="none" stroke="#7a4a20" stroke-width="1" />
<text transform="translate(40,600.9) scale(0.97,1)" fill="#fff" font-size="10.5" text-anchor="middle" >PCL</text>
<text transform="translate(76,600.9) scale(0.97,1)" fill="#fff" font-size="10.5" text-anchor="middle" >CAPE</text>
<text transform="translate(113.5,600.9) scale(0.97,1)" fill="#fff" font-size="10.5" text-anchor="middle" >CINH</text>
<text transform="translate(149.5,600.9) scale(0.97,1)" fill="#fff" font-size="10.5" text-anchor="middle" >LCL</text>
<text transform="translate(186.7,600.9) scale(0.97,1)" fill="#fff" font-size="10.5" text-anchor="middle" >LI</text>
<text transform="translate(222.5,600.9) scale(0.97,1)" fill="#fff" font-size="10.5" text-anchor="middle" >LFC</text>
<text transform="translate(258,600.9) scale(0.97,1)" fill="#fff" font-size="10.5" text-anchor="middle" >EL</text>
<text transform="translate(40,615.7) scale(0.97,1)" fill="#fff" font-size="10.5" text-anchor="middle" >SFC</text>
<text transform="translate(76,615.7) scale(0.97,1)" fill="#fff" font-size="10.5" text-anchor="middle" >2536</text>
<text transform="translate(113.5,615.7) scale(0.97,1)" fill="#fff" font-size="10.5" text-anchor="middle" >-180</text>
<text transform="translate(149.5,615.7) scale(0.97,1)" fill="#fff" font-size="10.5" text-anchor="middle" >757</text>
<text transform="translate(186.7,615.7) scale(0.97,1)" fill="#fff" font-size="10.5" text-anchor="middle" >-9</text>
<text transform="translate(222.5,615.7) scale(0.97,1)" fill="#fff" font-size="10.5" text-anchor="middle" >3274</text>
<text transform="translate(258,615.7) scale(0.97,1)" fill="#fff" font-size="10.5" text-anchor="middle" >13190</text>
<text transform="translate(40,626.3) scale(0.97,1)" fill="#fff" font-size="10.5" text-anchor="middle" >EFF</text>
<text transform="translate(76,626.3) scale(0.97,1)" fill="#fff" font-size="10.5" text-anchor="middle" >2345</text>
<text transform="translate(113.5,626.3) scale(0.97,1)" fill="#fff" font-size="10.5" text-anchor="middle" >-190</text>
<text transform="translate(149.5,626.3) scale(0.97,1)" fill="#fff" font-size="10.5" text-anchor="middle" >919</text>
<text transform="translate(186.7,626.3) scale(0.97,1)" fill="#fff" font-size="10.5" text-anchor="middle" >-8</text>
<text transform="translate(222.5,626.3) scale(0.97,1)" fill="#fff" font-size="10.5" text-anchor="middle" >3336</text>
<text transform="translate(258,626.3) scale(0.97,1)" fill="#fff" font-size="10.5" text-anchor="middle" >13190</text>
<text transform="translate(40,637.4) scale(0.97,1)" fill="#00e0e0" font-size="10.5" text-anchor="middle" >ML</text>
<text transform="translate(76,637.4) scale(0.97,1)" fill="#ff4500" font-size="10.5" text-anchor="middle" >2111</text>
<text transform="translate(113.5,637.4) scale(0.97,1)" fill="#00ee00" font-size="10.5" text-anchor="middle" >-222</text>
<text transform="translate(149.5,637.4) scale(0.97,1)" fill="#ff0000" font-size="10.5" text-anchor="middle" >987</text>
<text transform="translate(186.7,637.4) scale(0.97,1)" fill="#ff4500" font-size="10.5" text-anchor="middle" >-8</text>
<text transform="translate(222.5,637.4) scale(0.97,1)" fill="#fff" font-size="10.5" text-anchor="middle" >3525</text>
<text transform="translate(258,637.4) scale(0.97,1)" fill="#fff" font-size="10.5" text-anchor="middle" >13008</text>
<text transform="translate(40,648.3) scale(0.97,1)" fill="#fff" font-size="10.5" text-anchor="middle" >MU</text>
<text transform="translate(76,648.3) scale(0.97,1)" fill="#fff" font-size="10.5" text-anchor="middle" >2612</text>
<text transform="translate(113.5,648.3) scale(0.97,1)" fill="#fff" font-size="10.5" text-anchor="middle" >-160</text>
<text transform="translate(149.5,648.3) scale(0.97,1)" fill="#fff" font-size="10.5" text-anchor="middle" >831</text>
<text transform="translate(186.7,648.3) scale(0.97,1)" fill="#fff" font-size="10.5" text-anchor="middle" >-9</text>
<text transform="translate(222.5,648.3) scale(0.97,1)" fill="#fff" font-size="10.5" text-anchor="middle" >3274</text>
<text transform="translate(258,648.3) scale(0.97,1)" fill="#fff" font-size="10.5" text-anchor="middle" >13190</text>
<text transform="translate(9.5,664.5) scale(0.97,1)" fill="#fff" font-size="10.5" text-anchor="start" >PW = 1.54in</text>
<text transform="translate(106.5,664.5) scale(0.97,1)" fill="#fff" font-size="10.5" text-anchor="start" >K = 29</text>
<text transform="translate(180,664.5) scale(0.97,1)" fill="#fff" font-size="10.5" text-anchor="start" >WNDG = 0.0</text>
<text transform="translate(9.5,675.5) scale(0.97,1)" fill="#fff" font-size="10.5" text-anchor="start" >MeanW = 14.4g/kg</text>
<text transform="translate(106.5,675.5) scale(0.97,1)" fill="#fff" font-size="10.5" text-anchor="start" >TT = 53</text>
<text transform="translate(180,675.5) scale(0.97,1)" fill="#fff" font-size="10.5" text-anchor="start" >TEI = 23</text>
<text transform="translate(9.5,686.5) scale(0.97,1)" fill="#fff" font-size="10.5" text-anchor="start" >LowRH = 76%</text>
<text transform="translate(106.5,686.5) scale(0.97,1)" fill="#fff" font-size="10.5" text-anchor="start" >ConvT = 101F</text>
<text transform="translate(180,686.5) scale(0.97,1)" fill="#fff" font-size="10.5" text-anchor="start" >3CAPE = 0</text>
<text transform="translate(9.5,697.5) scale(0.97,1)" fill="#fff" font-size="10.5" text-anchor="start" >MidRH = 47%</text>
<text transform="translate(106.5,697.5) scale(0.97,1)" fill="#fff" font-size="10.5" text-anchor="start" >maxT = 85F</text>
<text transform="translate(180,697.5) scale(0.97,1)" fill="#fff" font-size="10.5" text-anchor="start" >MBURST = 4</text>
<text transform="translate(9.5,708.5) scale(0.97,1)" fill="#fff" font-size="10.5" text-anchor="start" >DCAPE = 1255</text>
<text transform="translate(106.5,708.5) scale(0.97,1)" fill="#fff" font-size="10.5" text-anchor="start" >ESP = 0</text>
<text transform="translate(9.5,719.5) scale(0.97,1)" fill="#fff" font-size="10.5" text-anchor="start" >DownT = 62F</text>
<text transform="translate(106.5,719.5) scale(0.97,1)" fill="#fff" font-size="10.5" text-anchor="start" >MMP = 0.97</text>
<text transform="translate(180,719.5) scale(0.97,1)" fill="#fff" font-size="10.5" text-anchor="start" >SigSvr = 54399 m3/s3</text>
<text transform="translate(9,736) scale(0.97,1)" fill="#00ee00" font-size="10.5" text-anchor="start" >Sfc-3km AGL LR = 5.6 C/km</text>
<text transform="translate(9,747) scale(0.97,1)" fill="#ff0000" font-size="10.5" text-anchor="start" >3-6km AGL LR = 8.9 C/km</text>
<text transform="translate(9,758) scale(0.97,1)" fill="#ffa500" font-size="10.5" text-anchor="start" >850-500mb LR = 7.3 C/km</text>
<text transform="translate(9,769) scale(0.97,1)" fill="#ee00ee" font-size="10.5" text-anchor="start" >700-500mb LR = 9.1 C/km</text>
<text transform="translate(209.5,736) scale(0.97,1)" fill="#ff4500" font-size="10.5" text-anchor="start" >Supercell = 6.0</text>
<text transform="translate(209.5,747) scale(0.97,1)" fill="#fff" font-size="10.5" text-anchor="start" >STP (cin) = 0.0</text>
<text transform="translate(209.5,758) scale(0.97,1)" fill="#ff4500" font-size="10.5" text-anchor="start" >STP (fix) = 2.2</text>
<text transform="translate(209.5,769) scale(0.97,1)" fill="#ff4500" font-size="10.5" text-anchor="start" >SHIP = 2.4</text>
<line x1="299.5" y1="605" x2="589" y2="605" stroke="#fff" stroke-width="2" />
<text transform="translate(386,603) scale(0.97,1)" fill="#fff" font-size="10.5" text-anchor="middle" >SRH (m2/s2)</text>
<text transform="translate(458.8,603) scale(0.97,1)" fill="#fff" font-size="10.5" text-anchor="middle" >Shear (kt)</text>
<text transform="translate(517.3,603) scale(0.97,1)" fill="#fff" font-size="10.5" text-anchor="middle" >MnWind</text>
<text transform="translate(570.5,603) scale(0.97,1)" fill="#fff" font-size="10.5" text-anchor="middle" >SRW</text>
<text transform="translate(303.7,616) scale(0.97,1)" fill="#fff" font-size="10.5" text-anchor="start" >SFC-1km</text>
<text transform="translate(413.5,616) scale(0.97,1)" fill="#fff" font-size="10.5" text-anchor="end" >155</text>
<text transform="translate(472.6,616) scale(0.97,1)" fill="#fff" font-size="10.5" text-anchor="end" >20</text>
<text transform="translate(498.9,616) scale(0.97,1)" fill="#fff" font-size="10.5" text-anchor="start" >211/25</text>
<text transform="translate(589.5,616) scale(0.97,1)" fill="#fff" font-size="10.5" text-anchor="end" >141/29</text>
<text transform="translate(303.7,627) scale(0.97,1)" fill="#fff" font-size="10.5" text-anchor="start" >SFC-3km</text>
<text transform="translate(413.5,627) scale(0.97,1)" fill="#fff" font-size="10.5" text-anchor="end" >173</text>
<text transform="translate(472.6,627) scale(0.97,1)" fill="#fff" font-size="10.5" text-anchor="end" >25</text>
<text transform="translate(498.9,627) scale(0.97,1)" fill="#fff" font-size="10.5" text-anchor="start" >227/27</text>
<text transform="translate(589.5,627) scale(0.97,1)" fill="#fff" font-size="10.5" text-anchor="end" >149/22</text>
<text transform="translate(303.7,638) scale(0.97,1)" fill="#fff" font-size="10.5" text-anchor="start" >Eff Inflow Layer</text>
<text transform="translate(413.5,638) scale(0.97,1)" fill="#fff" font-size="10.5" text-anchor="end" >116</text>
<text transform="translate(472.6,638) scale(0.97,1)" fill="#fff" font-size="10.5" text-anchor="end" >15</text>
<text transform="translate(498.9,638) scale(0.97,1)" fill="#fff" font-size="10.5" text-anchor="start" >208/21</text>
<text transform="translate(589.5,638) scale(0.97,1)" fill="#fff" font-size="10.5" text-anchor="end" >134/29</text>
<text transform="translate(303.7,654) scale(0.97,1)" fill="#fff" font-size="10.5" text-anchor="start" >SFC-6km</text>
<text transform="translate(472.6,654) scale(0.97,1)" fill="#fff" font-size="10.5" text-anchor="end" >50</text>
<text transform="translate(498.9,654) scale(0.97,1)" fill="#fff" font-size="10.5" text-anchor="start" >244/32</text>
<text transform="translate(589.5,654) scale(0.97,1)" fill="#fff" font-size="10.5" text-anchor="end" >172/15</text>
<text transform="translate(303.7,665) scale(0.97,1)" fill="#fff" font-size="10.5" text-anchor="start" >SFC-8km</text>
<text transform="translate(472.6,665) scale(0.97,1)" fill="#fff" font-size="10.5" text-anchor="end" >55</text>
<text transform="translate(498.9,665) scale(0.97,1)" fill="#fff" font-size="10.5" text-anchor="start" >247/35</text>
<text transform="translate(589.5,665) scale(0.97,1)" fill="#fff" font-size="10.5" text-anchor="end" >184/15</text>
<text transform="translate(303.7,676) scale(0.97,1)" fill="#d89020" font-size="10.5" text-anchor="start" >LCL-EL (Cloud Layer)</text>
<text transform="translate(472.6,676) scale(0.97,1)" fill="#fff" font-size="10.5" text-anchor="end" >49</text>
<text transform="translate(498.9,676) scale(0.97,1)" fill="#d89020" font-size="10.5" text-anchor="start" >256/42</text>
<text transform="translate(589.5,676) scale(0.97,1)" fill="#fff" font-size="10.5" text-anchor="end" >221/15</text>
<text transform="translate(303.7,687) scale(0.97,1)" fill="#fff" font-size="10.5" text-anchor="start" >Eff Shear (EBWD)</text>
<text transform="translate(472.6,687) scale(0.97,1)" fill="#fff" font-size="10.5" text-anchor="end" >52</text>
<text transform="translate(498.9,687) scale(0.97,1)" fill="#fff" font-size="10.5" text-anchor="start" >245/33</text>
<text transform="translate(589.5,687) scale(0.97,1)" fill="#fff" font-size="10.5" text-anchor="end" >177/15</text>
<text transform="translate(303.7,703) scale(0.97,1)" fill="#fff" font-size="10.5" text-anchor="start" >BRN Shear =</text>
<text transform="translate(472.6,703) scale(0.97,1)" fill="#fff" font-size="10.5" text-anchor="end" >50 m2/s2</text>
<text transform="translate(303.7,714) scale(0.97,1)" fill="#fff" font-size="10.5" text-anchor="start" >4-6km SR Wind =</text>
<text transform="translate(472.6,714) scale(0.97,1)" fill="#fff" font-size="10.5" text-anchor="end" >255/22 kt</text>
<text transform="translate(303.7,730) scale(0.97,1)" fill="#fff" font-size="10.5" text-anchor="start" >...Storm Motion Vectors...</text>
<text transform="translate(303.7,741) scale(0.97,1)" fill="#ff5050" font-size="10.5" text-anchor="start" >Bunkers Right =</text>
<text transform="translate(472.6,741) scale(0.97,1)" fill="#ff5050" font-size="10.5" text-anchor="end" >272/31 kt</text>
<text transform="translate(303.7,752) scale(0.97,1)" fill="#1e90d0" font-size="10.5" text-anchor="start" >Bunkers Left =</text>
<text transform="translate(472.6,752) scale(0.97,1)" fill="#1e90d0" font-size="10.5" text-anchor="end" >231/44 kt</text>
<text transform="translate(303.7,763) scale(0.97,1)" fill="#fff" font-size="10.5" text-anchor="start" >Corfidi Downshear =</text>
<text transform="translate(472.6,763) scale(0.97,1)" fill="#fff" font-size="10.5" text-anchor="end" >273/73 kt</text>
<text transform="translate(303.7,774) scale(0.97,1)" fill="#fff" font-size="10.5" text-anchor="start" >Corfidi Upshear =</text>
<text transform="translate(472.6,774) scale(0.97,1)" fill="#fff" font-size="10.5" text-anchor="end" >294/31 kt</text>
<path d="M532.3,724.6 L508,731.1 L505.3,721.5 L511.5,730 M513.8,729.3 L512.6,724.2" fill="none" stroke="#ff4500" stroke-width="1.4" stroke-linejoin="round"/>
<path d="M532.3,724.6 L517.1,744.7 L509.3,739.4 M519.6,741.6 L511.3,735.1 M521.8,738.7 L513.5,732.2" fill="none" stroke="#66e000" stroke-width="1.4" stroke-linejoin="round"/>
<text transform="translate(531.7,762.5) scale(0.97,1)" fill="#fff" font-size="10.5" text-anchor="middle" >1km &amp; 6km AGL</text>
<text transform="translate(531.7,773.5) scale(0.97,1)" fill="#fff" font-size="10.5" text-anchor="middle" >Wind Barbs</text>
<line x1="592" y1="614.2" x2="883" y2="614.2" stroke="#fff" stroke-width="2" />
<line x1="738.5" y1="614.2" x2="738.5" y2="779" stroke="#fff" stroke-width="2" />
<text x="737.3" y="607" fill="#fff" font-size="16" text-anchor="middle" >SARS - Sounding Analogue System</text>
<text x="664" y="631" fill="#fff" font-size="14" text-anchor="middle" >SUPERCELL</text>
<text x="810.6" y="631" fill="#fff" font-size="14" text-anchor="middle" >SEVERE HAIL</text>
<text x="593.6" y="643" fill="#ff0000" font-size="11" text-anchor="start" textLength="138.5" lengthAdjust="spacingAndGlyphs" xml:space="preserve">04 Jun 99 05Z (VTN)   WEAK</text>
<text x="593.6" y="654" fill="#ffee00" font-size="11" text-anchor="start" textLength="132.5" lengthAdjust="spacingAndGlyphs" >01 May 04 01Z (FWD) NON</text>
<text transform="translate(810.6,676) scale(0.97,1)" fill="#f0c030" font-size="10.5" text-anchor="middle" >No Quality Matches</text>
<text transform="translate(664,760) scale(0.97,1)" fill="#ee00ee" font-size="10.4" text-anchor="middle" >(47 loose matches)</text>
<text transform="translate(664,775.5) scale(0.97,1)" fill="#ee00ee" font-size="10.3" text-anchor="middle" >SARS: 66% TOR</text>
<text x="1031" y="603" fill="#fff" font-size="12.5" text-anchor="middle" >Effective Layer STP (with CIN)</text>
<line x1="904" y1="762.8" x2="1178" y2="762.8" stroke="#555" stroke-width="1.3" stroke-dasharray="3 3"/>
<text transform="translate(897,766.8) scale(0.97,1)" fill="#fff" font-size="11" text-anchor="end" >0</text>
<line x1="904" y1="749" x2="1178" y2="749" stroke="#555" stroke-width="1.3" stroke-dasharray="3 3"/>
<text transform="translate(897,753) scale(0.97,1)" fill="#fff" font-size="11" text-anchor="end" >1</text>
<line x1="904" y1="735.3" x2="1178" y2="735.3" stroke="#555" stroke-width="1.3" stroke-dasharray="3 3"/>
<text transform="translate(897,739.3) scale(0.97,1)" fill="#fff" font-size="11" text-anchor="end" >2</text>
<line x1="904" y1="721.5" x2="1178" y2="721.5" stroke="#555" stroke-width="1.3" stroke-dasharray="3 3"/>
<text transform="translate(897,725.5) scale(0.97,1)" fill="#fff" font-size="11" text-anchor="end" >3</text>
<line x1="904" y1="707.8" x2="1178" y2="707.8" stroke="#555" stroke-width="1.3" stroke-dasharray="3 3"/>
<text transform="translate(897,711.8) scale(0.97,1)" fill="#fff" font-size="11" text-anchor="end" >4</text>
<line x1="904" y1="694" x2="1178" y2="694" stroke="#555" stroke-width="1.3" stroke-dasharray="3 3"/>
<text transform="translate(897,698) scale(0.97,1)" fill="#fff" font-size="11" text-anchor="end" >5</text>
<line x1="904" y1="680.3" x2="1178" y2="680.3" stroke="#555" stroke-width="1.3" stroke-dasharray="3 3"/>
<text transform="translate(897,684.3) scale(0.97,1)" fill="#fff" font-size="11" text-anchor="end" >6</text>
<line x1="904" y1="666.5" x2="1178" y2="666.5" stroke="#555" stroke-width="1.3" stroke-dasharray="3 3"/>
<text transform="translate(897,670.5) scale(0.97,1)" fill="#fff" font-size="11" text-anchor="end" >7</text>
<line x1="904" y1="652.8" x2="1178" y2="652.8" stroke="#555" stroke-width="1.3" stroke-dasharray="3 3"/>
<text transform="translate(897,656.8) scale(0.97,1)" fill="#fff" font-size="11" text-anchor="end" >8</text>
<line x1="904" y1="639" x2="1178" y2="639" stroke="#555" stroke-width="1.3" stroke-dasharray="3 3"/>
<text transform="translate(897,643) scale(0.97,1)" fill="#fff" font-size="11" text-anchor="end" >9</text>
<line x1="904" y1="625.3" x2="1178" y2="625.3" stroke="#555" stroke-width="1.3" stroke-dasharray="3 3"/>
<text transform="translate(897,629.3) scale(0.97,1)" fill="#fff" font-size="11" text-anchor="end" >10</text>
<line x1="904" y1="611.5" x2="1178" y2="611.5" stroke="#555" stroke-width="1.3" stroke-dasharray="3 3"/>
<text transform="translate(897,615.5) scale(0.97,1)" fill="#fff" font-size="11" text-anchor="end" >11</text>
<line x1="886" y1="762.8" x2="1177" y2="762.8" stroke="#00d8e0" stroke-width="2.5" />
<line x1="926.5" y1="611.5" x2="926.5" y2="648.7" stroke="#ff00ff" stroke-width="2.5" />
<line x1="926.5" y1="727" x2="926.5" y2="747.7" stroke="#ff00ff" stroke-width="2.5" />
<rect x="916" y="648.7" width="21" height="78.4" fill="none" stroke="#ff00ff" stroke-width="2.5" />
<line x1="916" y1="689.9" x2="937" y2="689.9" stroke="#ff00ff" stroke-width="2.5" />
<text transform="translate(926.5,776) scale(0.97,1)" fill="#fff" font-size="11" text-anchor="middle" >EF4+</text>
<line x1="968.3" y1="645.9" x2="968.3" y2="700.9" stroke="#ff0000" stroke-width="2.5" />
<line x1="968.3" y1="749" x2="968.3" y2="761.4" stroke="#ff0000" stroke-width="2.5" />
<rect x="957.8" y="700.9" width="21" height="48.1" fill="none" stroke="#ff0000" stroke-width="2.5" />
<line x1="957.8" y1="730.5" x2="978.8" y2="730.5" stroke="#ff0000" stroke-width="2.5" />
<text transform="translate(968.3,776) scale(0.97,1)" fill="#fff" font-size="11" text-anchor="middle" >EF3</text>
<line x1="1010.5" y1="685.8" x2="1010.5" y2="711.9" stroke="#ff8c20" stroke-width="2.5" />
<line x1="1010.5" y1="754.5" x2="1010.5" y2="762.8" stroke="#ff8c20" stroke-width="2.5" />
<rect x="1000" y="711.9" width="21" height="42.6" fill="none" stroke="#ff8c20" stroke-width="2.5" />
<line x1="1000" y1="739.4" x2="1021" y2="739.4" stroke="#ff8c20" stroke-width="2.5" />
<text transform="translate(1010.5,776) scale(0.97,1)" fill="#fff" font-size="11" text-anchor="middle" >EF2</text>
<line x1="1051.3" y1="700.9" x2="1051.3" y2="727" stroke="#ffee00" stroke-width="2.5" />
<line x1="1051.3" y1="758.7" x2="1051.3" y2="760" stroke="#ffee00" stroke-width="2.5" />
<rect x="1040.8" y="727" width="21" height="31.6" fill="none" stroke="#ffee00" stroke-width="2.5" />
<line x1="1040.8" y1="746.3" x2="1061.8" y2="746.3" stroke="#ffee00" stroke-width="2.5" />
<text transform="translate(1051.3,776) scale(0.97,1)" fill="#fff" font-size="11" text-anchor="middle" >EF1</text>
<line x1="1093.5" y1="710.5" x2="1093.5" y2="735.3" stroke="#ffee00" stroke-width="2.5" />
<line x1="1093.5" y1="761.4" x2="1093.5" y2="762.8" stroke="#ffee00" stroke-width="2.5" />
<rect x="1083" y="735.3" width="21" height="26.1" fill="none" stroke="#ffee00" stroke-width="2.5" />
<line x1="1083" y1="751.8" x2="1104" y2="751.8" stroke="#ffee00" stroke-width="2.5" />
<text transform="translate(1093.5,776) scale(0.97,1)" fill="#fff" font-size="11" text-anchor="middle" >EF0</text>
<line x1="1135.5" y1="739.4" x2="1135.5" y2="753.2" stroke="#00ee00" stroke-width="2.5" />
<line x1="1135.5" y1="762.8" x2="1135.5" y2="762.8" stroke="#00ee00" stroke-width="2.5" />
<rect x="1125" y="753.2" width="21" height="9.6" fill="none" stroke="#00ee00" stroke-width="2.5" />
<line x1="1125" y1="760" x2="1146" y2="760" stroke="#00ee00" stroke-width="2.5" />
<text transform="translate(1135.5,776) scale(0.97,1)" fill="#fff" font-size="11" text-anchor="middle" >NONTOR</text>
<rect x="1031.5" y="612.3" width="141.5" height="84.4" fill="#000" stroke="#fff" stroke-width="2" />
<line x1="1031.5" y1="625.2" x2="1173" y2="625.2" stroke="#fff" stroke-width="2" />
<text transform="translate(1034,623.5) scale(0.97,1)" fill="#fff" font-size="10.5" text-anchor="start" >Prob EF2+ Given Supercell</text>
<text transform="translate(1033.5,635.5) scale(0.97,1)" fill="#ff4500" font-size="10.5" text-anchor="start" >based on CAPE:</text>
<text transform="translate(1158.5,635.5) scale(0.97,1)" fill="#ff4500" font-size="10.5" text-anchor="end" >0.14</text>
<text transform="translate(1033.5,646.5) scale(0.97,1)" fill="#ff0000" font-size="10.5" text-anchor="start" >based on LCL:</text>
<text transform="translate(1158.5,646.5) scale(0.97,1)" fill="#ff0000" font-size="10.5" text-anchor="end" >0.19</text>
<text transform="translate(1033.5,657.5) scale(0.97,1)" fill="#ffee00" font-size="10.5" text-anchor="start" >based on ESRH:</text>
<text transform="translate(1158.5,657.5) scale(0.97,1)" fill="#ffee00" font-size="10.5" text-anchor="end" >0.08</text>
<text transform="translate(1033.5,668.5) scale(0.97,1)" fill="#ff0000" font-size="10.5" text-anchor="start" >based on EBWD:</text>
<text transform="translate(1158.5,668.5) scale(0.97,1)" fill="#ff0000" font-size="10.5" text-anchor="end" >0.19</text>
<text transform="translate(1033.5,679.5) scale(0.97,1)" fill="#fff" font-size="10.5" text-anchor="start" >based on STPC:</text>
<text transform="translate(1158.5,679.5) scale(0.97,1)" fill="#fff" font-size="10.5" text-anchor="end" >0.06</text>
<text transform="translate(1033.5,690.5) scale(0.97,1)" fill="#ff4500" font-size="10.5" text-anchor="start" >based on STP_fixed:</text>
<text transform="translate(1158.5,690.5) scale(0.97,1)" fill="#ff4500" font-size="10.5" text-anchor="end" >0.25</text>
<path d="M419,497.5 L554,482.5 L554,489.3 L689.4,489.3 L689.4,505.4 L554,505.4 L554,512.5 Z" fill="none" stroke="#fff" stroke-width="5" stroke-linejoin="round"/>
</svg></body></html>
